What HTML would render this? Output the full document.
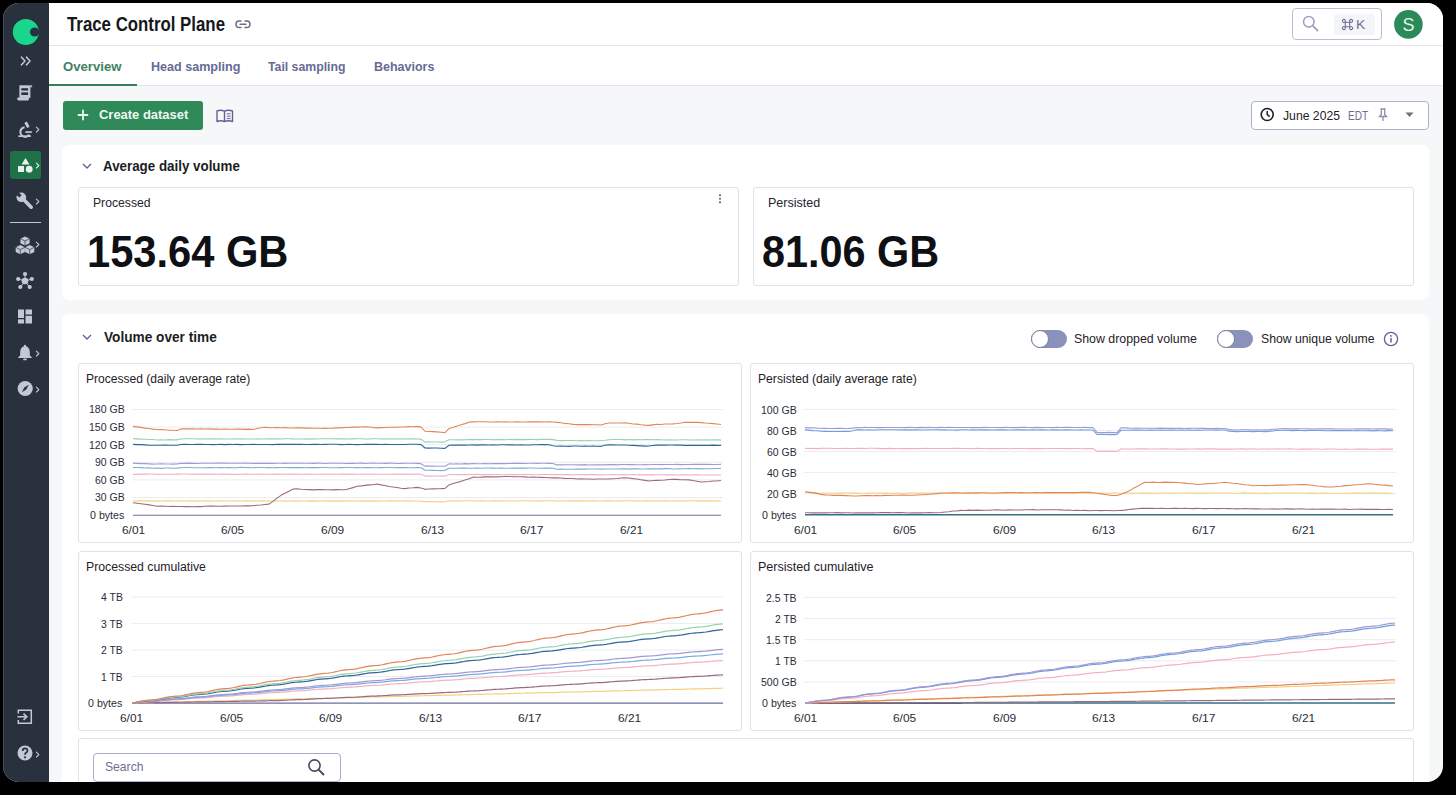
<!DOCTYPE html>
<html><head><meta charset="utf-8"><title>Trace Control Plane</title><style>
*{box-sizing:border-box;margin:0;padding:0}
html,body{width:1456px;height:795px;overflow:hidden;background:#000;font-family:"Liberation Sans",sans-serif}
#screen{position:absolute;left:3px;top:3px;width:1440px;height:779px;border-radius:16px;overflow:hidden;background:#f6f7f9}
#pg{position:absolute;left:-3px;top:-3px;width:1456px;height:795px}
.t{position:absolute;white-space:nowrap}
.b{position:absolute}
svg{position:absolute;overflow:visible}
</style></head><body><div id="screen"><div id="pg">
<div class="b" style="left:3px;top:3px;width:46px;height:792px;background:#29313f;border-left:1px solid #454b56"></div>
<div class="b" style="left:49px;top:3px;width:1394px;height:43px;background:#fff;border-bottom:1px solid #e3e4ea"></div>
<div class="b" style="left:49px;top:46px;width:1394px;height:40px;background:#fff;border-bottom:1px solid #e3e4ea"></div>
<div class="b" style="left:49px;top:84px;width:88px;height:2px;background:#3a7d5c"></div>
<svg style="left:12px;top:18px" width="28" height="28" viewBox="0 0 28 28"><circle cx="13.8" cy="14" r="13" fill="#19d68b"/><circle cx="22.6" cy="14" r="4.6" fill="#29313f"/></svg>
<svg style="left:20px;top:56px" width="12" height="10" viewBox="0 0 12 10"><path d="M1.5 1.2 L5 5 L1.5 8.8 M6.5 1.2 L10 5 L6.5 8.8" fill="none" stroke="#c3c8d4" stroke-width="1.6" stroke-linecap="round" stroke-linejoin="round"/></svg>
<svg style="left:17px;top:85px" width="16" height="16" viewBox="0 0 16 16"><rect x="2.4" y="0.3" width="11" height="12.6" fill="#c3c8d4"/><path d="M13.4 0.3 H14 Q15.2 0.3 15.2 1.6 V2.3 H13.4 Z" fill="#c3c8d4"/><rect x="4.3" y="3.2" width="6.8" height="2.3" fill="#29313f"/><rect x="4.3" y="7.4" width="6.8" height="2.6" fill="#29313f"/><rect x="0.2" y="12.6" width="11.8" height="2.8" rx="1.3" fill="#c3c8d4"/></svg>
<svg style="left:17px;top:121px" width="17" height="17" viewBox="0 0 17 17"><path d="M8.6 1.2 L11.4 6.4" stroke="#c3c8d4" stroke-width="2.9"/><path d="M7.6 6.2 A4.9 4.9 0 1 0 12.4 13.6" fill="none" stroke="#c3c8d4" stroke-width="2.1"/><rect x="8.4" y="10.2" width="6.4" height="1.7" fill="#c3c8d4"/><rect x="1.3" y="14.4" width="12.6" height="1.6" fill="#c3c8d4"/></svg>
<svg style="left:35px;top:126px" width="5" height="7" viewBox="0 0 5 7"><path d="M1.4 1.2 L3.9 3.6 L1.4 6" fill="none" stroke="#c3c8d4" stroke-width="1.1" stroke-linecap="round" stroke-linejoin="round"/></svg>
<div class="b" style="left:10px;top:151px;width:31px;height:28px;background:#1f7248;border-radius:3px"></div>
<svg style="left:17px;top:157px" width="17" height="17" viewBox="0 0 17 17"><path d="M8.5 1 L12.5 7.5 H4.5 Z" fill="#e8f2ec"/><rect x="1" y="9" width="6" height="6" fill="#e8f2ec"/><circle cx="12.2" cy="12.2" r="3.4" fill="#e8f2ec"/></svg>
<svg style="left:35px;top:162px" width="5" height="7" viewBox="0 0 5 7"><path d="M1.4 1.2 L3.9 3.6 L1.4 6" fill="none" stroke="#e8f2ec" stroke-width="1.1" stroke-linecap="round" stroke-linejoin="round"/></svg>
<svg style="left:16px;top:192px" width="18" height="18" viewBox="0 0 18 18"><path d="M7.6 7.6 L15.2 15.2" stroke="#c3c8d4" stroke-width="3.6" stroke-linecap="round"/><circle cx="5.3" cy="5.3" r="4.8" fill="#c3c8d4"/><path d="M-0.5 1.8 L1.8 -0.5 L5.6 3.3 L3.3 5.6 Z" fill="#29313f"/></svg>
<svg style="left:35px;top:198px" width="5" height="7" viewBox="0 0 5 7"><path d="M1.4 1.2 L3.9 3.6 L1.4 6" fill="none" stroke="#c3c8d4" stroke-width="1.1" stroke-linecap="round" stroke-linejoin="round"/></svg>
<div class="b" style="left:10px;top:222px;width:31px;height:1px;background:#c3c8d4"></div>
<svg style="left:15px;top:236px" width="20" height="20" viewBox="0 0 20 20"><path d="M10 0.40000000000000036 L14.6 2.7 L14.6 7.3 L10 9.6 L5.4 7.3 L5.4 2.7 Z" fill="#c3c8d4"/><path d="M5.4 2.7 L10 5 L14.6 2.7 M10 5 V9.6" fill="none" stroke="#29313f" stroke-width="0.7"/><path d="M5.3 9.0 L9.899999999999999 11.3 L9.899999999999999 15.899999999999999 L5.3 18.2 L0.7000000000000002 15.899999999999999 L0.7000000000000002 11.3 Z" fill="#c3c8d4"/><path d="M0.7000000000000002 11.3 L5.3 13.6 L9.899999999999999 11.3 M5.3 13.6 V18.2" fill="none" stroke="#29313f" stroke-width="0.7"/><path d="M14.7 9.0 L19.299999999999997 11.3 L19.299999999999997 15.899999999999999 L14.7 18.2 L10.1 15.899999999999999 L10.1 11.3 Z" fill="#c3c8d4"/><path d="M10.1 11.3 L14.7 13.6 L19.299999999999997 11.3 M14.7 13.6 V18.2" fill="none" stroke="#29313f" stroke-width="0.7"/></svg>
<svg style="left:35px;top:241px" width="5" height="7" viewBox="0 0 5 7"><path d="M1.4 1.2 L3.9 3.6 L1.4 6" fill="none" stroke="#c3c8d4" stroke-width="1.1" stroke-linecap="round" stroke-linejoin="round"/></svg>
<svg style="left:15px;top:271px" width="20" height="20" viewBox="0 0 20 20"><path d="M10 10 L10 3 M10 10 L3.2 8 M10 10 L16.8 8 M10 10 L5.3 16.3 M10 10 L14.7 16.3" stroke="#c3c8d4" stroke-width="1.0"/><circle cx="10" cy="10" r="3.3" fill="#c3c8d4"/><circle cx="10" cy="3" r="2.1" fill="#c3c8d4"/><circle cx="3.2" cy="8" r="2.1" fill="#c3c8d4"/><circle cx="16.8" cy="8" r="2.1" fill="#c3c8d4"/><circle cx="5.3" cy="16" r="2.1" fill="#c3c8d4"/><circle cx="14.7" cy="16" r="2.1" fill="#c3c8d4"/></svg>
<svg style="left:18px;top:309px" width="15" height="15" viewBox="0 0 15 15"><rect x="0" y="0.5" width="6" height="8.5" fill="#c3c8d4"/><rect x="7.5" y="0.5" width="6.5" height="5" fill="#c3c8d4"/><rect x="0" y="10.3" width="6" height="4.2" fill="#c3c8d4"/><rect x="7.5" y="6.8" width="6.5" height="7.7" fill="#c3c8d4"/></svg>
<svg style="left:17px;top:344px" width="16" height="18" viewBox="0 0 16 18"><path d="M8 0.8 Q9 0.8 9.1 2.2 Q12.6 3.4 12.8 8 V11.3 L15.2 14 H0.8 L3.2 11.3 V8 Q3.4 3.4 6.9 2.2 Q7 0.8 8 0.8 Z" fill="#c3c8d4"/><rect x="6.2" y="14.6" width="3.6" height="1.7" rx="0.85" fill="#c3c8d4"/></svg>
<svg style="left:35px;top:350px" width="5" height="7" viewBox="0 0 5 7"><path d="M1.4 1.2 L3.9 3.6 L1.4 6" fill="none" stroke="#c3c8d4" stroke-width="1.1" stroke-linecap="round" stroke-linejoin="round"/></svg>
<svg style="left:17px;top:380px" width="17" height="17" viewBox="0 0 17 17"><circle cx="8.2" cy="8.5" r="7.6" fill="#c3c8d4"/><path d="M11.8 4.8 L9.3 9.6 L5 12.2 L7.2 7.5 Z" fill="#29313f"/></svg>
<svg style="left:35px;top:386px" width="5" height="7" viewBox="0 0 5 7"><path d="M1.4 1.2 L3.9 3.6 L1.4 6" fill="none" stroke="#c3c8d4" stroke-width="1.1" stroke-linecap="round" stroke-linejoin="round"/></svg>
<svg style="left:17px;top:709px" width="16" height="16" viewBox="0 0 16 16"><path d="M1.3 4.5 V1.3 H14.3 V14.3 H1.3 V11" fill="none" stroke="#c3c8d4" stroke-width="1.5"/><path d="M0.5 7.8 H9.5 M6.5 4.6 L9.8 7.8 L6.5 11" fill="none" stroke="#c3c8d4" stroke-width="1.6"/></svg>
<svg style="left:17px;top:745px" width="16" height="17" viewBox="0 0 16 17"><circle cx="8" cy="8" r="7.5" fill="#c3c8d4"/><path d="M5.6 6 Q5.6 3.4 8 3.4 Q10.5 3.4 10.5 5.7 Q10.5 7 9 7.8 Q8 8.4 8 9.8" fill="none" stroke="#29313f" stroke-width="1.7"/><circle cx="8" cy="12.3" r="1.1" fill="#29313f"/></svg>
<svg style="left:35px;top:751px" width="5" height="7" viewBox="0 0 5 7"><path d="M1.4 1.2 L3.9 3.6 L1.4 6" fill="none" stroke="#c3c8d4" stroke-width="1.1" stroke-linecap="round" stroke-linejoin="round"/></svg>
<div class="t" style="left:67.43px;top:13.56px;font-size:20px;line-height:20px;font-weight:700;color:#16181d;transform:scaleX(0.8411);transform-origin:0 0;">Trace Control Plane</div>
<svg style="left:235px;top:20px" width="16" height="9" viewBox="0 0 16 9"><path d="M6 1 H4.2 Q1 1 1 4.2 Q1 7.5 4.2 7.5 H6 M10 1 H11.8 Q15 1 15 4.2 Q15 7.5 11.8 7.5 H10 M5 4.25 H11" fill="none" stroke="#6a6e82" stroke-width="1.5" stroke-linecap="round"/></svg>
<div class="b" style="left:1292px;top:8px;width:90px;height:32px;border:1px solid #b9bcd3;border-radius:4px;background:#fff"></div>
<svg style="left:1302px;top:15px" width="17" height="17" viewBox="0 0 17 17"><circle cx="6.8" cy="6.8" r="5.3" fill="none" stroke="#9ea2c4" stroke-width="1.6"/><path d="M10.6 10.6 L15.5 15.5" stroke="#9ea2c4" stroke-width="1.8" stroke-linecap="round"/></svg>
<div class="b" style="left:1334px;top:14px;width:41px;height:21px;background:#f4f5f9;border-radius:3px"></div>
<svg style="left:1342px;top:19px" width="11" height="11" viewBox="0 0 11 11"><path d="M3.3 3.3 H7.7 V7.7 H3.3 Z M3.3 3.3 V2.3 A1.5 1.5 0 1 0 2.3 3.3 H3.3 M7.7 3.3 H8.7 A1.5 1.5 0 1 0 7.7 2.3 V3.3 M7.7 7.7 V8.7 A1.5 1.5 0 1 0 8.7 7.7 H7.7 M3.3 7.7 H2.3 A1.5 1.5 0 1 0 3.3 8.7 V7.7" fill="none" stroke="#6c7093" stroke-width="1.1"/></svg>
<div class="t" style="left:1356.09px;top:18.97px;font-size:12.2px;line-height:12.2px;color:#6c7093;transform:scaleX(1.1404);transform-origin:0 0;">K</div>
<svg style="left:1394px;top:10px" width="29" height="29" viewBox="0 0 29 29"><circle cx="14.4" cy="14.4" r="14.3" fill="#2b8a5a"/></svg>
<div class="t" style="left:1402.62px;top:16.05px;font-size:18px;line-height:18px;color:#e3f7e9;">S</div>
<div class="t" style="left:63.17px;top:60.39px;font-size:13px;line-height:13px;font-weight:700;color:#3f8262;transform:scaleX(1.0117);transform-origin:0 0;">Overview</div>
<div class="t" style="left:150.78px;top:60.39px;font-size:13px;line-height:13px;font-weight:700;color:#666a96;transform:scaleX(0.9665);transform-origin:0 0;">Head sampling</div>
<div class="t" style="left:268.38px;top:60.39px;font-size:13px;line-height:13px;font-weight:700;color:#666a96;transform:scaleX(0.9430);transform-origin:0 0;">Tail sampling</div>
<div class="t" style="left:374.19px;top:60.39px;font-size:13px;line-height:13px;font-weight:700;color:#666a96;transform:scaleX(0.9595);transform-origin:0 0;">Behaviors</div>
<div class="b" style="left:63px;top:101px;width:140px;height:29px;background:#2f8959;border-radius:3px"></div>
<svg style="left:77px;top:109px" width="12" height="12" viewBox="0 0 12 12"><path d="M6 0.8 V11.2 M0.8 6 H11.2" stroke="#eef8f1" stroke-width="1.8"/></svg>
<div class="t" style="left:99.08px;top:108.49px;font-size:13px;line-height:13px;font-weight:700;color:#eef8f1;transform:scaleX(0.9964);transform-origin:0 0;">Create dataset</div>
<svg style="left:216px;top:109px" width="18" height="14" viewBox="0 0 18 14"><path d="M1 2 Q4.5 0.5 8.5 2.2 V12.5 Q4.5 11 1 12.5 Z M8.5 2.2 Q12.5 0.5 16.5 2 V12.5 Q12.5 11 8.5 12.5" fill="none" stroke="#5f6396" stroke-width="1.4" stroke-linejoin="round"/><path d="M10.8 4.8 H14.5 M10.8 7.2 H14.5 M10.8 9.6 H14.5" stroke="#5f6396" stroke-width="1"/></svg>
<div class="b" style="left:1251px;top:101px;width:178px;height:29px;border:1px solid #aeb1cc;border-radius:4px;background:#fff"></div>
<svg style="left:1260px;top:107px" width="15" height="15" viewBox="0 0 15 15"><circle cx="7.2" cy="7.5" r="6" fill="none" stroke="#1f2128" stroke-width="1.6"/><path d="M7.2 4 V7.6 L9.8 9.6" fill="none" stroke="#1f2128" stroke-width="1.5"/></svg>
<div class="t" style="left:1283.12px;top:109.19px;font-size:13px;line-height:13px;color:#1f2128;transform:scaleX(0.9384);transform-origin:0 0;">June 2025</div>
<div class="t" style="left:1347.69px;top:110.04px;font-size:12px;line-height:12px;color:#6b6f96;transform:scaleX(0.8421);transform-origin:0 0;">EDT</div>
<svg style="left:1378px;top:108px" width="10" height="14" viewBox="0 0 10 14"><path d="M2.5 1 H7.5 M3.3 1 V6.5 L1.5 8.5 H8.5 L6.7 6.5 V1 M5 8.5 V13" fill="none" stroke="#8d90a4" stroke-width="1.3"/></svg>
<svg style="left:1405px;top:112px" width="9" height="6" viewBox="0 0 9 6"><path d="M0.5 0.5 H8.5 L4.5 5 Z" fill="#6d7080"/></svg>
<div class="b" style="left:62px;top:145px;width:1367px;height:155px;background:#fff;border-radius:7px"></div>
<svg style="left:82px;top:163px" width="10" height="7" viewBox="0 0 10 7"><path d="M1 1 L5 5 L9 1" fill="none" stroke="#5c6090" stroke-width="1.3"/></svg>
<div class="t" style="left:103.47px;top:159.14px;font-size:14px;line-height:14px;font-weight:700;color:#1b1d24;transform:scaleX(0.9538);transform-origin:0 0;">Average daily volume</div>
<div class="b" style="left:78px;top:187px;width:661px;height:99px;border:1px solid #dfe1e7;border-radius:3px;background:#fff"></div>
<div class="b" style="left:753px;top:187px;width:661px;height:99px;border:1px solid #dfe1e7;border-radius:3px;background:#fff"></div>
<div class="t" style="left:92.73px;top:196.93px;font-size:12.6px;line-height:12.6px;color:#22252b;transform:scaleX(0.9669);transform-origin:0 0;">Processed</div>
<div class="t" style="left:768.30px;top:196.93px;font-size:12.6px;line-height:12.6px;color:#22252b;transform:scaleX(0.9931);transform-origin:0 0;">Persisted</div>
<div class="t" style="left:87.20px;top:229.08px;font-size:45px;line-height:45px;font-weight:700;color:#0f1014;transform:scaleX(0.9255);transform-origin:0 0;">153.64 GB</div>
<div class="t" style="left:762.16px;top:229.38px;font-size:45px;line-height:45px;font-weight:700;color:#0f1014;transform:scaleX(0.9195);transform-origin:0 0;">81.06 GB</div>
<svg style="left:718px;top:194px" width="4" height="10" viewBox="0 0 4 10"><circle cx="2" cy="1.3" r="1" fill="#55596e"/><circle cx="2" cy="4.8" r="1" fill="#55596e"/><circle cx="2" cy="8.3" r="1" fill="#55596e"/></svg>
<div class="b" style="left:62px;top:314px;width:1367px;height:481px;background:#fff;border-radius:7px"></div>
<svg style="left:82px;top:334px" width="10" height="7" viewBox="0 0 10 7"><path d="M1 1 L5 5 L9 1" fill="none" stroke="#5c6090" stroke-width="1.3"/></svg>
<div class="t" style="left:103.63px;top:330.44px;font-size:14px;line-height:14px;font-weight:700;color:#1b1d24;transform:scaleX(0.9750);transform-origin:0 0;">Volume over time</div>
<div class="b" style="left:1031px;top:330px;width:36px;height:18px;background:#8a92bc;border-radius:9px"></div><div class="b" style="left:1031px;top:330px;width:18px;height:18px;background:#fff;border:1px solid #7a7f9c;border-radius:50%"></div>
<div class="t" style="left:1074.44px;top:333.10px;font-size:12.4px;line-height:12.4px;color:#1f2128;transform:scaleX(0.9962);transform-origin:0 0;">Show dropped volume</div>
<div class="b" style="left:1217px;top:330px;width:36px;height:18px;background:#8a92bc;border-radius:9px"></div><div class="b" style="left:1217px;top:330px;width:18px;height:18px;background:#fff;border:1px solid #7a7f9c;border-radius:50%"></div>
<div class="t" style="left:1260.65px;top:333.10px;font-size:12.4px;line-height:12.4px;color:#1f2128;transform:scaleX(0.9876);transform-origin:0 0;">Show unique volume</div>
<svg style="left:1383px;top:331px" width="16" height="16" viewBox="0 0 16 16"><circle cx="8" cy="8" r="6.6" fill="none" stroke="#5f6396" stroke-width="1.3"/><path d="M8 7 V11.5" stroke="#5f6396" stroke-width="1.5"/><circle cx="8" cy="4.9" r="0.9" fill="#5f6396"/></svg>
<div class="b" style="left:78px;top:363px;width:664px;height:180px;border:1px solid #dfe1e7;border-radius:3px;background:#fff"></div>
<div class="b" style="left:750px;top:363px;width:664px;height:180px;border:1px solid #dfe1e7;border-radius:3px;background:#fff"></div>
<div class="b" style="left:78px;top:551px;width:664px;height:180px;border:1px solid #dfe1e7;border-radius:3px;background:#fff"></div>
<div class="b" style="left:750px;top:551px;width:664px;height:180px;border:1px solid #dfe1e7;border-radius:3px;background:#fff"></div>
<div class="b" style="left:78px;top:738px;width:1336px;height:62px;border:1px solid #dfe1e7;border-radius:3px;background:#fff"></div>
<div class="t" style="left:85.74px;top:373.04px;font-size:12px;line-height:12px;color:#1f2128;transform:scaleX(1.0049);transform-origin:0 0;">Processed (daily average rate)</div>
<div class="t" style="left:758.03px;top:373.04px;font-size:12px;line-height:12px;color:#1f2128;transform:scaleX(1.0126);transform-origin:0 0;">Persisted (daily average rate)</div>
<div class="t" style="left:85.52px;top:560.74px;font-size:12px;line-height:12px;color:#1f2128;transform:scaleX(1.0211);transform-origin:0 0;">Processed cumulative</div>
<div class="t" style="left:758.20px;top:560.74px;font-size:12px;line-height:12px;color:#1f2128;transform:scaleX(1.0440);transform-origin:0 0;">Persisted cumulative</div>
<svg style="left:0;top:0" width="1456" height="795"><path d="M132 409.5 H723" stroke="#ebecf0" stroke-width="1"/><path d="M132 427.1 H723" stroke="#ebecf0" stroke-width="1"/><path d="M132 444.7 H723" stroke="#ebecf0" stroke-width="1"/><path d="M132 462.3 H723" stroke="#ebecf0" stroke-width="1"/><path d="M132 479.9 H723" stroke="#ebecf0" stroke-width="1"/><path d="M132 497.5 H723" stroke="#ebecf0" stroke-width="1"/><path d="M133.0 515.20 L137.0 515.20 L141.0 515.20 L145.0 515.20 L149.0 515.20 L153.0 515.20 L157.0 515.20 L161.0 515.20 L165.0 515.20 L169.0 515.20 L173.0 515.20 L177.0 515.20 L181.0 515.20 L185.0 515.20 L189.0 515.20 L193.0 515.20 L197.0 515.20 L201.0 515.20 L205.0 515.20 L209.0 515.20 L213.0 515.20 L217.0 515.20 L221.0 515.20 L225.0 515.20 L229.0 515.20 L233.0 515.20 L237.0 515.20 L241.0 515.20 L245.0 515.20 L249.0 515.20 L253.0 515.20 L257.0 515.20 L261.0 515.20 L265.0 515.20 L269.0 515.20 L273.0 515.20 L277.0 515.20 L281.0 515.20 L285.0 515.20 L289.0 515.20 L293.0 515.20 L297.0 515.20 L301.0 515.20 L305.0 515.20 L309.0 515.20 L313.0 515.20 L317.0 515.20 L321.0 515.20 L325.0 515.20 L329.0 515.20 L333.0 515.20 L337.0 515.20 L341.0 515.20 L345.0 515.20 L349.0 515.20 L353.0 515.20 L357.0 515.20 L361.0 515.20 L365.0 515.20 L369.0 515.20 L373.0 515.20 L377.0 515.20 L381.0 515.20 L385.0 515.20 L389.0 515.20 L393.0 515.20 L397.0 515.20 L401.0 515.20 L405.0 515.20 L409.0 515.20 L413.0 515.20 L417.0 515.20 L421.0 515.20 L425.0 515.20 L429.0 515.20 L433.0 515.20 L437.0 515.20 L441.0 515.20 L445.0 515.20 L449.0 515.20 L453.0 515.20 L457.0 515.20 L461.0 515.20 L465.0 515.20 L469.0 515.20 L473.0 515.20 L477.0 515.20 L481.0 515.20 L485.0 515.20 L489.0 515.20 L493.0 515.20 L497.0 515.20 L501.0 515.20 L505.0 515.20 L509.0 515.20 L513.0 515.20 L517.0 515.20 L521.0 515.20 L525.0 515.20 L529.0 515.20 L533.0 515.20 L537.0 515.20 L541.0 515.20 L545.0 515.20 L549.0 515.20 L553.0 515.20 L557.0 515.20 L561.0 515.20 L565.0 515.20 L569.0 515.20 L573.0 515.20 L577.0 515.20 L581.0 515.20 L585.0 515.20 L589.0 515.20 L593.0 515.20 L597.0 515.20 L601.0 515.20 L605.0 515.20 L609.0 515.20 L613.0 515.20 L617.0 515.20 L621.0 515.20 L625.0 515.20 L629.0 515.20 L633.0 515.20 L637.0 515.20 L641.0 515.20 L645.0 515.20 L649.0 515.20 L653.0 515.20 L657.0 515.20 L661.0 515.20 L665.0 515.20 L669.0 515.20 L673.0 515.20 L677.0 515.20 L681.0 515.20 L685.0 515.20 L689.0 515.20 L693.0 515.20 L697.0 515.20 L701.0 515.20 L705.0 515.20 L709.0 515.20 L713.0 515.20 L717.0 515.20 L721.0 515.20" fill="none" stroke="#6b6f9b" stroke-width="1.1" stroke-linejoin="round"/><path d="M133.0 500.85 L137.0 501.09 L141.0 500.91 L145.0 500.88 L149.0 500.85 L153.0 501.12 L157.0 501.13 L161.0 501.06 L165.0 500.92 L169.0 500.91 L173.0 500.93 L177.0 500.99 L181.0 500.88 L185.0 500.98 L189.0 500.91 L193.0 501.17 L197.0 501.17 L201.0 501.02 L205.0 500.91 L209.0 501.17 L213.0 500.93 L217.0 500.95 L221.0 500.82 L225.0 500.96 L229.0 500.99 L233.0 501.00 L237.0 500.89 L241.0 501.00 L245.0 500.82 L249.0 500.92 L253.0 500.85 L257.0 500.96 L261.0 500.84 L265.0 500.83 L269.0 500.93 L273.0 500.90 L277.0 501.03 L281.0 501.01 L285.0 501.09 L289.0 501.06 L293.0 501.08 L297.0 501.14 L301.0 500.96 L305.0 500.94 L309.0 501.17 L313.0 500.87 L317.0 501.08 L321.0 501.05 L325.0 500.84 L329.0 501.12 L333.0 501.14 L337.0 501.05 L341.0 501.08 L345.0 501.11 L349.0 500.87 L353.0 501.01 L357.0 501.00 L361.0 501.12 L365.0 501.11 L369.0 501.12 L373.0 501.03 L377.0 501.14 L381.0 501.07 L385.0 501.07 L389.0 500.90 L393.0 500.83 L397.0 500.87 L401.0 500.95 L405.0 500.86 L409.0 501.12 L413.0 501.02 L417.0 501.05 L421.0 501.11 L425.0 501.67 L429.0 501.64 L433.0 501.50 L437.0 501.83 L441.0 501.85 L445.0 501.80 L449.0 500.91 L453.0 500.96 L457.0 500.74 L461.0 500.99 L465.0 500.81 L469.0 500.75 L473.0 500.82 L477.0 500.98 L481.0 500.79 L485.0 500.99 L489.0 501.07 L493.0 500.90 L497.0 500.86 L501.0 500.89 L505.0 500.97 L509.0 501.00 L513.0 500.94 L517.0 500.95 L521.0 500.75 L525.0 500.77 L529.0 500.81 L533.0 500.99 L537.0 500.83 L541.0 500.92 L545.0 500.72 L549.0 500.74 L553.0 500.82 L557.0 500.96 L561.0 500.97 L565.0 500.96 L569.0 500.82 L573.0 500.91 L577.0 500.89 L581.0 500.89 L585.0 500.76 L589.0 501.04 L593.0 500.79 L597.0 501.07 L601.0 501.06 L605.0 500.73 L609.0 500.89 L613.0 501.02 L617.0 501.07 L621.0 500.88 L625.0 500.82 L629.0 500.80 L633.0 501.06 L637.0 500.80 L641.0 500.93 L645.0 500.77 L649.0 500.91 L653.0 501.06 L657.0 500.77 L661.0 501.02 L665.0 500.90 L669.0 501.04 L673.0 500.97 L677.0 500.80 L681.0 501.04 L685.0 500.90 L689.0 500.73 L693.0 500.72 L697.0 500.90 L701.0 500.88 L705.0 500.83 L709.0 500.77 L713.0 500.84 L717.0 500.83 L721.0 501.02" fill="none" stroke="#f2d281" stroke-width="1.1" stroke-linejoin="round"/><path d="M133.0 502.72 L137.0 503.29 L141.0 503.82 L145.0 504.30 L149.0 504.89 L153.0 505.49 L157.0 506.21 L161.0 506.05 L165.0 506.19 L169.0 506.49 L173.0 506.40 L177.0 506.43 L181.0 506.52 L185.0 506.67 L189.0 506.53 L193.0 506.71 L197.0 506.62 L201.0 506.61 L205.0 506.29 L209.0 506.17 L213.0 506.12 L217.0 506.21 L221.0 506.23 L225.0 506.08 L229.0 505.95 L233.0 505.96 L237.0 505.97 L241.0 505.94 L245.0 505.91 L249.0 505.89 L253.0 505.77 L257.0 505.21 L261.0 505.06 L265.0 504.44 L269.0 504.13 L273.0 501.38 L277.0 498.09 L281.0 495.33 L285.0 493.25 L289.0 491.15 L293.0 489.02 L297.0 488.71 L301.0 489.29 L305.0 489.55 L309.0 489.59 L313.0 489.83 L317.0 489.67 L321.0 489.59 L325.0 489.82 L329.0 489.78 L333.0 489.92 L337.0 489.62 L341.0 489.77 L345.0 489.73 L349.0 488.67 L353.0 487.63 L357.0 486.30 L361.0 485.90 L365.0 485.36 L369.0 484.90 L373.0 484.69 L377.0 484.07 L381.0 484.91 L385.0 485.52 L389.0 486.51 L393.0 486.98 L397.0 487.49 L401.0 488.26 L405.0 488.66 L409.0 487.98 L413.0 487.77 L417.0 487.39 L421.0 487.94 L425.0 489.35 L429.0 489.07 L433.0 488.90 L437.0 488.72 L441.0 488.64 L445.0 488.46 L449.0 484.91 L453.0 483.59 L457.0 482.47 L461.0 481.35 L465.0 479.93 L469.0 478.73 L473.0 477.17 L477.0 477.31 L481.0 477.15 L485.0 476.90 L489.0 476.84 L493.0 476.88 L497.0 476.86 L501.0 476.82 L505.0 476.54 L509.0 476.50 L513.0 476.75 L517.0 476.75 L521.0 476.81 L525.0 476.92 L529.0 477.25 L533.0 477.12 L537.0 477.32 L541.0 477.35 L545.0 477.47 L549.0 477.74 L553.0 477.89 L557.0 477.87 L561.0 478.02 L565.0 478.42 L569.0 478.44 L573.0 478.57 L577.0 478.98 L581.0 478.86 L585.0 479.05 L589.0 478.95 L593.0 479.18 L597.0 479.07 L601.0 479.02 L605.0 479.01 L609.0 479.00 L613.0 478.75 L617.0 478.56 L621.0 477.98 L625.0 477.89 L629.0 477.95 L633.0 478.59 L637.0 479.06 L641.0 479.71 L645.0 480.39 L649.0 481.02 L653.0 480.48 L657.0 480.37 L661.0 480.24 L665.0 480.06 L669.0 479.53 L673.0 479.26 L677.0 479.41 L681.0 479.69 L685.0 479.77 L689.0 479.88 L693.0 480.45 L697.0 481.29 L701.0 482.05 L705.0 481.68 L709.0 481.49 L713.0 480.98 L717.0 480.94 L721.0 480.47" fill="none" stroke="#9c6a82" stroke-width="1.1" stroke-linejoin="round"/><path d="M133.0 474.35 L137.0 474.36 L141.0 474.06 L145.0 474.09 L149.0 474.06 L153.0 474.03 L157.0 474.33 L161.0 474.31 L165.0 474.25 L169.0 474.32 L173.0 474.25 L177.0 474.12 L181.0 474.06 L185.0 474.06 L189.0 474.29 L193.0 474.09 L197.0 474.13 L201.0 474.17 L205.0 474.03 L209.0 474.11 L213.0 474.12 L217.0 474.28 L221.0 474.15 L225.0 474.14 L229.0 474.37 L233.0 474.20 L237.0 474.33 L241.0 474.24 L245.0 474.03 L249.0 474.17 L253.0 474.18 L257.0 474.30 L261.0 474.14 L265.0 474.27 L269.0 474.21 L273.0 474.10 L277.0 474.33 L281.0 474.05 L285.0 474.32 L289.0 474.08 L293.0 474.02 L297.0 474.09 L301.0 474.29 L305.0 474.37 L309.0 474.02 L313.0 474.20 L317.0 474.20 L321.0 474.31 L325.0 474.09 L329.0 474.20 L333.0 474.14 L337.0 474.32 L341.0 474.11 L345.0 474.36 L349.0 474.12 L353.0 474.10 L357.0 474.27 L361.0 474.20 L365.0 474.06 L369.0 474.25 L373.0 474.05 L377.0 474.30 L381.0 474.27 L385.0 474.30 L389.0 474.25 L393.0 474.15 L397.0 474.16 L401.0 474.16 L405.0 474.34 L409.0 474.05 L413.0 474.34 L417.0 474.03 L421.0 474.31 L425.0 475.91 L429.0 476.14 L433.0 476.00 L437.0 475.96 L441.0 476.14 L445.0 475.90 L449.0 474.49 L453.0 474.52 L457.0 474.60 L461.0 474.61 L465.0 474.58 L469.0 474.48 L473.0 474.47 L477.0 474.42 L481.0 474.67 L485.0 474.61 L489.0 474.65 L493.0 474.45 L497.0 474.55 L501.0 474.68 L505.0 474.61 L509.0 474.45 L513.0 474.58 L517.0 474.74 L521.0 474.51 L525.0 474.50 L529.0 474.55 L533.0 474.70 L537.0 474.75 L541.0 474.51 L545.0 474.52 L549.0 474.56 L553.0 474.59 L557.0 474.67 L561.0 474.54 L565.0 474.61 L569.0 474.56 L573.0 474.85 L577.0 474.77 L581.0 474.55 L585.0 474.87 L589.0 474.56 L593.0 474.67 L597.0 474.89 L601.0 474.83 L605.0 474.81 L609.0 474.71 L613.0 474.63 L617.0 474.80 L621.0 474.61 L625.0 474.65 L629.0 474.72 L633.0 474.60 L637.0 474.74 L641.0 474.89 L645.0 474.86 L649.0 474.79 L653.0 474.85 L657.0 474.79 L661.0 474.68 L665.0 474.85 L669.0 474.79 L673.0 474.92 L677.0 474.98 L681.0 474.81 L685.0 474.87 L689.0 474.94 L693.0 474.83 L697.0 474.77 L701.0 474.95 L705.0 475.01 L709.0 474.98 L713.0 474.96 L717.0 475.02 L721.0 474.96" fill="none" stroke="#f4afc0" stroke-width="1.1" stroke-linejoin="round"/><path d="M133.0 467.47 L137.0 467.54 L141.0 467.64 L145.0 468.00 L149.0 467.91 L153.0 468.32 L157.0 468.05 L161.0 468.33 L165.0 468.07 L169.0 468.03 L173.0 468.28 L177.0 468.11 L181.0 467.78 L185.0 467.49 L189.0 467.44 L193.0 467.70 L197.0 467.68 L201.0 467.73 L205.0 467.68 L209.0 467.45 L213.0 467.65 L217.0 467.68 L221.0 467.59 L225.0 467.76 L229.0 467.51 L233.0 467.77 L237.0 467.68 L241.0 467.42 L245.0 467.43 L249.0 467.65 L253.0 467.71 L257.0 467.45 L261.0 467.53 L265.0 467.68 L269.0 467.48 L273.0 467.73 L277.0 467.60 L281.0 467.44 L285.0 467.55 L289.0 467.63 L293.0 467.58 L297.0 467.66 L301.0 467.47 L305.0 467.71 L309.0 467.55 L313.0 467.65 L317.0 467.65 L321.0 467.57 L325.0 467.56 L329.0 467.70 L333.0 467.76 L337.0 467.70 L341.0 467.62 L345.0 467.53 L349.0 467.44 L353.0 467.77 L357.0 467.67 L361.0 467.72 L365.0 467.54 L369.0 467.64 L373.0 467.77 L377.0 467.72 L381.0 467.64 L385.0 467.53 L389.0 467.57 L393.0 467.74 L397.0 467.56 L401.0 467.67 L405.0 467.64 L409.0 467.74 L413.0 467.71 L417.0 467.52 L421.0 467.74 L425.0 470.22 L429.0 470.31 L433.0 470.41 L437.0 470.53 L441.0 470.60 L445.0 470.33 L449.0 468.22 L453.0 468.21 L457.0 468.23 L461.0 468.13 L465.0 468.02 L469.0 468.23 L473.0 468.21 L477.0 468.17 L481.0 468.25 L485.0 468.04 L489.0 467.95 L493.0 468.12 L497.0 468.21 L501.0 467.99 L505.0 468.19 L509.0 468.26 L513.0 468.00 L517.0 468.14 L521.0 468.16 L525.0 468.09 L529.0 467.99 L533.0 468.01 L537.0 468.19 L541.0 468.20 L545.0 468.09 L549.0 467.95 L553.0 468.29 L557.0 469.30 L561.0 469.09 L565.0 469.20 L569.0 469.30 L573.0 469.28 L577.0 469.14 L581.0 469.10 L585.0 469.13 L589.0 468.97 L593.0 468.96 L597.0 468.94 L601.0 469.11 L605.0 468.98 L609.0 469.03 L613.0 468.96 L617.0 468.99 L621.0 468.84 L625.0 468.79 L629.0 469.12 L633.0 468.88 L637.0 468.77 L641.0 468.94 L645.0 468.98 L649.0 468.74 L653.0 468.89 L657.0 468.78 L661.0 468.83 L665.0 468.63 L669.0 468.62 L673.0 468.95 L677.0 468.90 L681.0 468.74 L685.0 468.76 L689.0 468.63 L693.0 468.81 L697.0 468.66 L701.0 468.84 L705.0 468.76 L709.0 468.76 L713.0 468.80 L717.0 468.53 L721.0 468.44" fill="none" stroke="#78ade0" stroke-width="1.1" stroke-linejoin="round"/><path d="M133.0 463.35 L137.0 463.34 L141.0 463.62 L145.0 463.61 L149.0 463.83 L153.0 464.10 L157.0 464.04 L161.0 463.91 L165.0 464.01 L169.0 463.98 L173.0 464.16 L177.0 463.92 L181.0 463.34 L185.0 463.35 L189.0 463.16 L193.0 463.33 L197.0 463.46 L201.0 463.30 L205.0 463.22 L209.0 463.29 L213.0 463.31 L217.0 463.17 L221.0 463.16 L225.0 463.17 L229.0 463.23 L233.0 463.27 L237.0 463.22 L241.0 463.21 L245.0 463.15 L249.0 463.32 L253.0 463.42 L257.0 463.34 L261.0 463.33 L265.0 463.35 L269.0 463.19 L273.0 463.38 L277.0 463.29 L281.0 463.32 L285.0 463.34 L289.0 463.29 L293.0 463.23 L297.0 463.21 L301.0 463.20 L305.0 463.30 L309.0 463.26 L313.0 463.33 L317.0 463.12 L321.0 463.25 L325.0 463.43 L329.0 463.21 L333.0 463.32 L337.0 463.30 L341.0 463.22 L345.0 463.48 L349.0 463.23 L353.0 463.40 L357.0 463.18 L361.0 463.14 L365.0 463.43 L369.0 463.28 L373.0 463.14 L377.0 463.26 L381.0 463.28 L385.0 463.38 L389.0 463.16 L393.0 463.20 L397.0 463.47 L401.0 463.39 L405.0 463.18 L409.0 463.24 L413.0 463.25 L417.0 463.36 L421.0 463.66 L425.0 466.13 L429.0 466.16 L433.0 466.09 L437.0 466.21 L441.0 466.25 L445.0 466.29 L449.0 463.89 L453.0 463.97 L457.0 463.92 L461.0 463.96 L465.0 463.65 L469.0 463.90 L473.0 463.56 L477.0 463.80 L481.0 463.71 L485.0 463.65 L489.0 463.79 L493.0 463.63 L497.0 463.54 L501.0 463.65 L505.0 463.65 L509.0 463.53 L513.0 463.42 L517.0 463.42 L521.0 463.40 L525.0 463.47 L529.0 463.28 L533.0 463.29 L537.0 463.33 L541.0 463.24 L545.0 463.19 L549.0 463.33 L553.0 463.44 L557.0 464.90 L561.0 464.87 L565.0 464.76 L569.0 464.79 L573.0 464.71 L577.0 464.85 L581.0 464.84 L585.0 464.65 L589.0 464.93 L593.0 464.71 L597.0 464.88 L601.0 464.86 L605.0 464.89 L609.0 464.60 L613.0 464.67 L617.0 464.83 L621.0 464.49 L625.0 464.49 L629.0 464.66 L633.0 464.62 L637.0 464.76 L641.0 464.69 L645.0 464.59 L649.0 464.74 L653.0 464.56 L657.0 464.54 L661.0 464.59 L665.0 464.47 L669.0 464.44 L673.0 464.51 L677.0 464.41 L681.0 464.61 L685.0 464.50 L689.0 464.43 L693.0 464.26 L697.0 464.35 L701.0 464.34 L705.0 464.38 L709.0 464.37 L713.0 464.47 L717.0 464.49 L721.0 464.30" fill="none" stroke="#a597d6" stroke-width="1.1" stroke-linejoin="round"/><path d="M133.0 444.37 L137.0 444.59 L141.0 444.58 L145.0 444.87 L149.0 445.21 L153.0 445.27 L157.0 445.32 L161.0 445.21 L165.0 445.14 L169.0 445.25 L173.0 445.27 L177.0 445.19 L181.0 444.56 L185.0 444.37 L189.0 444.57 L193.0 444.56 L197.0 444.40 L201.0 444.40 L205.0 444.50 L209.0 444.47 L213.0 444.64 L217.0 444.43 L221.0 444.41 L225.0 444.62 L229.0 444.35 L233.0 444.50 L237.0 444.42 L241.0 444.59 L245.0 444.49 L249.0 444.57 L253.0 444.35 L257.0 444.53 L261.0 444.50 L265.0 444.45 L269.0 444.56 L273.0 444.58 L277.0 444.32 L281.0 444.38 L285.0 444.41 L289.0 444.35 L293.0 444.30 L297.0 444.37 L301.0 444.34 L305.0 444.52 L309.0 444.43 L313.0 444.31 L317.0 444.38 L321.0 444.43 L325.0 444.39 L329.0 444.32 L333.0 444.28 L337.0 444.26 L341.0 444.61 L345.0 444.52 L349.0 444.28 L353.0 444.51 L357.0 444.60 L361.0 444.45 L365.0 444.28 L369.0 444.42 L373.0 444.40 L377.0 444.31 L381.0 444.43 L385.0 444.24 L389.0 444.56 L393.0 444.46 L397.0 444.46 L401.0 444.56 L405.0 444.46 L409.0 444.32 L413.0 444.31 L417.0 444.27 L421.0 444.65 L425.0 448.00 L429.0 448.11 L433.0 447.99 L437.0 448.03 L441.0 448.27 L445.0 448.42 L449.0 445.25 L453.0 444.96 L457.0 445.17 L461.0 445.17 L465.0 445.12 L469.0 444.96 L473.0 444.89 L477.0 445.10 L481.0 444.91 L485.0 444.91 L489.0 444.96 L493.0 444.88 L497.0 445.03 L501.0 444.80 L505.0 444.71 L509.0 444.89 L513.0 444.89 L517.0 444.95 L521.0 444.89 L525.0 444.94 L529.0 444.94 L533.0 444.76 L537.0 444.75 L541.0 444.61 L545.0 444.65 L549.0 444.73 L553.0 445.67 L557.0 446.27 L561.0 446.08 L565.0 446.18 L569.0 446.37 L573.0 446.05 L577.0 446.03 L581.0 446.18 L585.0 446.09 L589.0 446.28 L593.0 446.02 L597.0 446.32 L601.0 446.33 L605.0 445.31 L609.0 444.90 L613.0 444.90 L617.0 445.07 L621.0 445.06 L625.0 445.07 L629.0 445.21 L633.0 445.42 L637.0 445.67 L641.0 445.90 L645.0 446.10 L649.0 446.01 L653.0 445.54 L657.0 445.09 L661.0 445.14 L665.0 445.08 L669.0 445.03 L673.0 445.00 L677.0 445.10 L681.0 445.16 L685.0 445.36 L689.0 445.35 L693.0 445.34 L697.0 445.40 L701.0 445.40 L705.0 445.29 L709.0 445.37 L713.0 445.11 L717.0 445.35 L721.0 445.34" fill="none" stroke="#2f659c" stroke-width="1.1" stroke-linejoin="round"/><path d="M133.0 438.64 L137.0 438.90 L141.0 439.14 L145.0 439.22 L149.0 439.50 L153.0 439.54 L157.0 439.95 L161.0 439.82 L165.0 439.98 L169.0 439.64 L173.0 439.84 L177.0 439.88 L181.0 438.98 L185.0 438.75 L189.0 438.78 L193.0 438.77 L197.0 439.00 L201.0 438.75 L205.0 439.01 L209.0 438.87 L213.0 438.91 L217.0 438.93 L221.0 438.92 L225.0 438.96 L229.0 438.94 L233.0 438.84 L237.0 438.99 L241.0 438.81 L245.0 438.98 L249.0 438.99 L253.0 439.00 L257.0 438.83 L261.0 439.00 L265.0 439.07 L269.0 438.88 L273.0 438.82 L277.0 438.91 L281.0 439.06 L285.0 438.77 L289.0 438.72 L293.0 438.89 L297.0 438.96 L301.0 439.00 L305.0 438.85 L309.0 439.08 L313.0 438.80 L317.0 438.99 L321.0 438.75 L325.0 438.73 L329.0 438.77 L333.0 438.74 L337.0 438.90 L341.0 438.92 L345.0 438.79 L349.0 439.06 L353.0 438.85 L357.0 438.77 L361.0 438.78 L365.0 438.99 L369.0 439.05 L373.0 438.78 L377.0 438.73 L381.0 439.00 L385.0 438.81 L389.0 439.07 L393.0 438.90 L397.0 438.95 L401.0 438.84 L405.0 439.01 L409.0 438.89 L413.0 438.84 L417.0 439.05 L421.0 439.13 L425.0 442.08 L429.0 441.84 L433.0 442.05 L437.0 441.96 L441.0 442.13 L445.0 441.84 L449.0 439.82 L453.0 439.75 L457.0 439.92 L461.0 439.91 L465.0 439.78 L469.0 439.62 L473.0 439.62 L477.0 439.60 L481.0 439.65 L485.0 439.56 L489.0 439.54 L493.0 439.72 L497.0 439.66 L501.0 439.53 L505.0 439.76 L509.0 439.47 L513.0 439.58 L517.0 439.41 L521.0 439.65 L525.0 439.64 L529.0 439.41 L533.0 439.57 L537.0 439.58 L541.0 439.37 L545.0 439.37 L549.0 439.41 L553.0 439.64 L557.0 440.38 L561.0 440.58 L565.0 440.55 L569.0 440.51 L573.0 440.57 L577.0 440.68 L581.0 440.45 L585.0 440.70 L589.0 440.52 L593.0 440.68 L597.0 440.72 L601.0 440.48 L605.0 440.21 L609.0 439.78 L613.0 439.54 L617.0 439.46 L621.0 439.51 L625.0 439.83 L629.0 439.50 L633.0 439.84 L637.0 439.58 L641.0 439.80 L645.0 439.58 L649.0 439.62 L653.0 439.82 L657.0 439.62 L661.0 439.73 L665.0 439.95 L669.0 439.89 L673.0 439.97 L677.0 440.01 L681.0 439.69 L685.0 439.77 L689.0 439.99 L693.0 439.97 L697.0 439.75 L701.0 439.93 L705.0 439.84 L709.0 439.93 L713.0 439.83 L717.0 439.81 L721.0 440.17" fill="none" stroke="#98d2ae" stroke-width="1.1" stroke-linejoin="round"/><path d="M133.0 426.42 L137.0 426.87 L141.0 427.39 L145.0 428.11 L149.0 428.46 L153.0 429.15 L157.0 429.53 L161.0 429.65 L165.0 429.81 L169.0 430.18 L173.0 430.21 L177.0 430.57 L181.0 428.91 L185.0 428.80 L189.0 428.90 L193.0 428.72 L197.0 429.04 L201.0 428.78 L205.0 429.00 L209.0 428.88 L213.0 429.17 L217.0 429.07 L221.0 429.18 L225.0 429.10 L229.0 429.19 L233.0 429.22 L237.0 429.11 L241.0 429.11 L245.0 429.36 L249.0 429.14 L253.0 429.45 L257.0 428.57 L261.0 427.80 L265.0 427.27 L269.0 427.58 L273.0 427.71 L277.0 427.58 L281.0 427.73 L285.0 427.65 L289.0 427.95 L293.0 427.94 L297.0 427.81 L301.0 427.84 L305.0 428.13 L309.0 427.96 L313.0 428.31 L317.0 428.18 L321.0 428.23 L325.0 428.42 L329.0 428.20 L333.0 428.11 L337.0 427.79 L341.0 427.89 L345.0 427.51 L349.0 427.52 L353.0 427.10 L357.0 427.16 L361.0 427.05 L365.0 426.91 L369.0 427.06 L373.0 427.46 L377.0 427.83 L381.0 427.58 L385.0 427.57 L389.0 427.27 L393.0 427.28 L397.0 427.24 L401.0 427.01 L405.0 426.97 L409.0 426.63 L413.0 426.76 L417.0 426.38 L421.0 427.10 L425.0 431.20 L429.0 431.49 L433.0 431.66 L437.0 431.88 L441.0 432.22 L445.0 432.67 L449.0 428.52 L453.0 427.47 L457.0 425.96 L461.0 424.82 L465.0 423.61 L469.0 422.17 L473.0 421.91 L477.0 421.75 L481.0 421.77 L485.0 421.82 L489.0 422.04 L493.0 422.02 L497.0 421.80 L501.0 422.05 L505.0 421.73 L509.0 421.94 L513.0 422.07 L517.0 421.84 L521.0 422.06 L525.0 421.96 L529.0 421.74 L533.0 421.84 L537.0 421.88 L541.0 421.81 L545.0 421.99 L549.0 421.78 L553.0 422.04 L557.0 422.35 L561.0 422.76 L565.0 423.42 L569.0 423.74 L573.0 424.40 L577.0 424.65 L581.0 424.64 L585.0 424.64 L589.0 424.55 L593.0 424.78 L597.0 424.69 L601.0 424.94 L605.0 423.77 L609.0 423.03 L613.0 422.95 L617.0 422.95 L621.0 423.06 L625.0 422.88 L629.0 423.27 L633.0 423.94 L637.0 424.11 L641.0 424.68 L645.0 425.08 L649.0 425.33 L653.0 424.84 L657.0 424.29 L661.0 424.44 L665.0 424.03 L669.0 424.04 L673.0 423.92 L677.0 423.53 L681.0 423.00 L685.0 422.28 L689.0 422.41 L693.0 422.40 L697.0 422.35 L701.0 422.59 L705.0 423.01 L709.0 423.28 L713.0 423.59 L717.0 423.98 L721.0 424.55" fill="none" stroke="#e3855a" stroke-width="1.1" stroke-linejoin="round"/><path d="M804 409.4 H1396" stroke="#ebecf0" stroke-width="1"/><path d="M804 430.5 H1396" stroke="#ebecf0" stroke-width="1"/><path d="M804 451.6 H1396" stroke="#ebecf0" stroke-width="1"/><path d="M804 472.6 H1396" stroke="#ebecf0" stroke-width="1"/><path d="M804 493.7 H1396" stroke="#ebecf0" stroke-width="1"/><path d="M805.0 514.70 L809.0 514.70 L813.0 514.70 L817.0 514.70 L821.0 514.70 L825.0 514.70 L829.0 514.70 L833.0 514.70 L837.0 514.70 L841.0 514.70 L845.0 514.70 L849.0 514.70 L853.0 514.70 L857.0 514.70 L861.0 514.70 L865.0 514.70 L869.0 514.70 L873.0 514.70 L877.0 514.70 L881.0 514.70 L885.0 514.70 L889.0 514.70 L893.0 514.70 L897.0 514.70 L901.0 514.70 L905.0 514.70 L909.0 514.70 L913.0 514.70 L917.0 514.70 L921.0 514.70 L925.0 514.70 L929.0 514.70 L933.0 514.70 L937.0 514.70 L941.0 514.70 L945.0 514.70 L949.0 514.70 L953.0 514.70 L957.0 514.70 L961.0 514.70 L965.0 514.70 L969.0 514.70 L973.0 514.70 L977.0 514.70 L981.0 514.70 L985.0 514.70 L989.0 514.70 L993.0 514.70 L997.0 514.70 L1001.0 514.70 L1005.0 514.70 L1009.0 514.70 L1013.0 514.70 L1017.0 514.70 L1021.0 514.70 L1025.0 514.70 L1029.0 514.70 L1033.0 514.70 L1037.0 514.70 L1041.0 514.70 L1045.0 514.70 L1049.0 514.70 L1053.0 514.70 L1057.0 514.70 L1061.0 514.70 L1065.0 514.70 L1069.0 514.70 L1073.0 514.70 L1077.0 514.70 L1081.0 514.70 L1085.0 514.70 L1089.0 514.70 L1093.0 514.70 L1097.0 514.70 L1101.0 514.70 L1105.0 514.70 L1109.0 514.70 L1113.0 514.70 L1117.0 514.70 L1121.0 514.70 L1125.0 514.70 L1129.0 514.70 L1133.0 514.70 L1137.0 514.70 L1141.0 514.70 L1145.0 514.70 L1149.0 514.70 L1153.0 514.70 L1157.0 514.70 L1161.0 514.70 L1165.0 514.70 L1169.0 514.70 L1173.0 514.70 L1177.0 514.70 L1181.0 514.70 L1185.0 514.70 L1189.0 514.70 L1193.0 514.70 L1197.0 514.70 L1201.0 514.70 L1205.0 514.70 L1209.0 514.70 L1213.0 514.70 L1217.0 514.70 L1221.0 514.70 L1225.0 514.70 L1229.0 514.70 L1233.0 514.70 L1237.0 514.70 L1241.0 514.70 L1245.0 514.70 L1249.0 514.70 L1253.0 514.70 L1257.0 514.70 L1261.0 514.70 L1265.0 514.70 L1269.0 514.70 L1273.0 514.70 L1277.0 514.70 L1281.0 514.70 L1285.0 514.70 L1289.0 514.70 L1293.0 514.70 L1297.0 514.70 L1301.0 514.70 L1305.0 514.70 L1309.0 514.70 L1313.0 514.70 L1317.0 514.70 L1321.0 514.70 L1325.0 514.70 L1329.0 514.70 L1333.0 514.70 L1337.0 514.70 L1341.0 514.70 L1345.0 514.70 L1349.0 514.70 L1353.0 514.70 L1357.0 514.70 L1361.0 514.70 L1365.0 514.70 L1369.0 514.70 L1373.0 514.70 L1377.0 514.70 L1381.0 514.70 L1385.0 514.70 L1389.0 514.70 L1393.0 514.70" fill="none" stroke="#336f86" stroke-width="1.6" stroke-linejoin="round"/><path d="M805.0 512.68 L809.0 512.78 L813.0 512.87 L817.0 512.87 L821.0 512.89 L825.0 512.89 L829.0 512.71 L833.0 512.71 L837.0 512.63 L841.0 512.87 L845.0 512.70 L849.0 512.71 L853.0 512.97 L857.0 512.85 L861.0 512.83 L865.0 512.86 L869.0 512.84 L873.0 512.87 L877.0 512.73 L881.0 512.64 L885.0 512.64 L889.0 512.63 L893.0 512.75 L897.0 512.67 L901.0 512.66 L905.0 512.80 L909.0 512.97 L913.0 512.87 L917.0 512.72 L921.0 512.90 L925.0 512.68 L929.0 512.66 L933.0 512.73 L937.0 512.77 L941.0 512.47 L945.0 511.98 L949.0 511.68 L953.0 511.05 L957.0 510.96 L961.0 510.34 L965.0 510.49 L969.0 510.16 L973.0 510.42 L977.0 510.17 L981.0 510.36 L985.0 510.31 L989.0 510.23 L993.0 510.05 L997.0 509.92 L1001.0 509.96 L1005.0 510.18 L1009.0 509.88 L1013.0 510.02 L1017.0 509.96 L1021.0 509.96 L1025.0 509.75 L1029.0 509.71 L1033.0 509.65 L1037.0 509.94 L1041.0 509.69 L1045.0 509.75 L1049.0 509.81 L1053.0 509.76 L1057.0 509.78 L1061.0 509.85 L1065.0 510.23 L1069.0 510.05 L1073.0 510.43 L1077.0 510.29 L1081.0 510.50 L1085.0 510.37 L1089.0 510.68 L1093.0 510.51 L1097.0 510.55 L1101.0 510.61 L1105.0 510.46 L1109.0 510.51 L1113.0 510.71 L1117.0 510.52 L1121.0 510.36 L1125.0 510.10 L1129.0 509.50 L1133.0 509.09 L1137.0 508.70 L1141.0 508.36 L1145.0 508.27 L1149.0 508.38 L1153.0 508.34 L1157.0 508.50 L1161.0 508.23 L1165.0 508.47 L1169.0 508.55 L1173.0 508.35 L1177.0 508.30 L1181.0 508.46 L1185.0 508.37 L1189.0 508.51 L1193.0 508.62 L1197.0 508.42 L1201.0 508.44 L1205.0 508.59 L1209.0 508.50 L1213.0 508.54 L1217.0 508.64 L1221.0 508.54 L1225.0 508.54 L1229.0 508.66 L1233.0 508.72 L1237.0 508.91 L1241.0 508.79 L1245.0 508.64 L1249.0 508.71 L1253.0 508.92 L1257.0 508.87 L1261.0 509.00 L1265.0 509.05 L1269.0 509.03 L1273.0 508.78 L1277.0 509.10 L1281.0 508.97 L1285.0 508.89 L1289.0 508.88 L1293.0 509.15 L1297.0 508.93 L1301.0 508.91 L1305.0 508.99 L1309.0 509.25 L1313.0 509.10 L1317.0 509.22 L1321.0 509.00 L1325.0 509.15 L1329.0 509.12 L1333.0 509.10 L1337.0 509.29 L1341.0 509.20 L1345.0 509.13 L1349.0 509.46 L1353.0 509.30 L1357.0 509.21 L1361.0 509.17 L1365.0 509.42 L1369.0 509.39 L1373.0 509.23 L1377.0 509.41 L1381.0 509.52 L1385.0 509.47 L1389.0 509.38 L1393.0 509.49" fill="none" stroke="#9c6a82" stroke-width="1.1" stroke-linejoin="round"/><path d="M805.0 491.50 L809.0 491.97 L813.0 492.38 L817.0 492.93 L821.0 493.21 L825.0 493.03 L829.0 493.03 L833.0 493.18 L837.0 492.94 L841.0 493.14 L845.0 492.95 L849.0 492.94 L853.0 493.10 L857.0 492.97 L861.0 493.26 L865.0 493.24 L869.0 493.09 L873.0 492.99 L877.0 492.96 L881.0 493.10 L885.0 493.11 L889.0 493.05 L893.0 493.18 L897.0 493.11 L901.0 493.20 L905.0 492.96 L909.0 492.95 L913.0 493.06 L917.0 493.09 L921.0 493.01 L925.0 493.16 L929.0 493.00 L933.0 493.03 L937.0 493.09 L941.0 493.18 L945.0 493.20 L949.0 493.05 L953.0 493.08 L957.0 493.25 L961.0 493.26 L965.0 493.14 L969.0 492.96 L973.0 493.08 L977.0 493.15 L981.0 493.02 L985.0 492.93 L989.0 493.27 L993.0 493.25 L997.0 492.97 L1001.0 493.09 L1005.0 493.14 L1009.0 493.03 L1013.0 492.94 L1017.0 493.19 L1021.0 493.20 L1025.0 493.08 L1029.0 492.95 L1033.0 493.06 L1037.0 492.95 L1041.0 493.27 L1045.0 492.94 L1049.0 493.02 L1053.0 493.20 L1057.0 492.97 L1061.0 492.96 L1065.0 492.95 L1069.0 492.98 L1073.0 493.11 L1077.0 493.22 L1081.0 492.98 L1085.0 492.98 L1089.0 493.20 L1093.0 493.07 L1097.0 493.04 L1101.0 492.96 L1105.0 493.01 L1109.0 493.27 L1113.0 492.96 L1117.0 493.01 L1121.0 493.19 L1125.0 493.24 L1129.0 493.25 L1133.0 493.09 L1137.0 493.26 L1141.0 493.14 L1145.0 493.02 L1149.0 493.09 L1153.0 493.18 L1157.0 493.18 L1161.0 492.97 L1165.0 492.99 L1169.0 493.26 L1173.0 492.96 L1177.0 493.21 L1181.0 493.04 L1185.0 493.01 L1189.0 493.01 L1193.0 493.09 L1197.0 493.28 L1201.0 492.97 L1205.0 493.23 L1209.0 493.04 L1213.0 492.98 L1217.0 493.19 L1221.0 493.04 L1225.0 492.99 L1229.0 493.07 L1233.0 493.22 L1237.0 493.23 L1241.0 493.13 L1245.0 492.92 L1249.0 493.19 L1253.0 493.14 L1257.0 493.24 L1261.0 493.26 L1265.0 493.04 L1269.0 493.23 L1273.0 493.21 L1277.0 493.02 L1281.0 493.05 L1285.0 493.05 L1289.0 493.05 L1293.0 493.06 L1297.0 492.96 L1301.0 493.00 L1305.0 493.25 L1309.0 493.07 L1313.0 493.15 L1317.0 493.24 L1321.0 493.19 L1325.0 493.01 L1329.0 493.25 L1333.0 493.21 L1337.0 493.28 L1341.0 493.18 L1345.0 493.19 L1349.0 493.21 L1353.0 493.01 L1357.0 493.16 L1361.0 493.06 L1365.0 493.22 L1369.0 492.97 L1373.0 493.11 L1377.0 493.04 L1381.0 493.22 L1385.0 493.04 L1389.0 493.22 L1393.0 493.23" fill="none" stroke="#f2d281" stroke-width="1.1" stroke-linejoin="round"/><path d="M805.0 491.69 L809.0 492.35 L813.0 492.84 L817.0 493.40 L821.0 494.35 L825.0 494.91 L829.0 495.04 L833.0 495.36 L837.0 495.20 L841.0 495.39 L845.0 495.59 L849.0 495.74 L853.0 496.04 L857.0 495.95 L861.0 495.70 L865.0 495.65 L869.0 495.60 L873.0 495.68 L877.0 495.64 L881.0 495.69 L885.0 495.40 L889.0 495.56 L893.0 495.30 L897.0 495.22 L901.0 495.11 L905.0 495.03 L909.0 495.24 L913.0 495.18 L917.0 495.01 L921.0 494.76 L925.0 494.69 L929.0 494.30 L933.0 493.94 L937.0 493.65 L941.0 492.98 L945.0 493.00 L949.0 493.04 L953.0 492.79 L957.0 492.92 L961.0 493.03 L965.0 492.94 L969.0 492.88 L973.0 493.01 L977.0 492.90 L981.0 492.79 L985.0 492.79 L989.0 492.97 L993.0 492.93 L997.0 492.93 L1001.0 492.79 L1005.0 492.62 L1009.0 492.61 L1013.0 492.67 L1017.0 492.77 L1021.0 492.50 L1025.0 492.78 L1029.0 492.75 L1033.0 492.64 L1037.0 492.44 L1041.0 492.71 L1045.0 492.56 L1049.0 492.63 L1053.0 492.58 L1057.0 492.62 L1061.0 492.49 L1065.0 492.67 L1069.0 492.65 L1073.0 492.63 L1077.0 492.50 L1081.0 492.38 L1085.0 492.38 L1089.0 492.33 L1093.0 492.79 L1097.0 493.31 L1101.0 493.88 L1105.0 494.46 L1109.0 495.08 L1113.0 495.54 L1117.0 495.50 L1121.0 494.34 L1125.0 492.84 L1129.0 491.02 L1133.0 488.60 L1137.0 486.60 L1141.0 484.21 L1145.0 482.22 L1149.0 482.45 L1153.0 482.15 L1157.0 482.45 L1161.0 482.39 L1165.0 482.17 L1169.0 482.39 L1173.0 482.33 L1177.0 482.54 L1181.0 482.81 L1185.0 483.14 L1189.0 483.71 L1193.0 483.79 L1197.0 484.43 L1201.0 484.18 L1205.0 483.92 L1209.0 483.54 L1213.0 483.49 L1217.0 483.01 L1221.0 482.79 L1225.0 482.29 L1229.0 482.76 L1233.0 483.23 L1237.0 483.53 L1241.0 484.17 L1245.0 484.75 L1249.0 485.07 L1253.0 485.73 L1257.0 485.53 L1261.0 485.47 L1265.0 485.58 L1269.0 485.50 L1273.0 485.42 L1277.0 485.13 L1281.0 485.09 L1285.0 485.08 L1289.0 484.97 L1293.0 484.77 L1297.0 484.82 L1301.0 484.56 L1305.0 484.67 L1309.0 484.93 L1313.0 485.28 L1317.0 485.98 L1321.0 486.24 L1325.0 486.91 L1329.0 486.96 L1333.0 486.96 L1337.0 486.46 L1341.0 486.20 L1345.0 485.65 L1349.0 485.50 L1353.0 485.07 L1357.0 484.69 L1361.0 484.56 L1365.0 483.95 L1369.0 483.81 L1373.0 484.03 L1377.0 484.67 L1381.0 485.06 L1385.0 485.11 L1389.0 485.63 L1393.0 486.00" fill="none" stroke="#e3855a" stroke-width="1.1" stroke-linejoin="round"/><path d="M805.0 448.35 L809.0 448.48 L813.0 448.33 L817.0 448.58 L821.0 448.39 L825.0 448.24 L829.0 448.27 L833.0 448.50 L837.0 448.55 L841.0 448.47 L845.0 448.30 L849.0 448.56 L853.0 448.51 L857.0 448.30 L861.0 448.40 L865.0 448.50 L869.0 448.27 L873.0 448.28 L877.0 448.40 L881.0 448.59 L885.0 448.63 L889.0 448.39 L893.0 448.61 L897.0 448.57 L901.0 448.60 L905.0 448.50 L909.0 448.64 L913.0 448.53 L917.0 448.64 L921.0 448.50 L925.0 448.37 L929.0 448.49 L933.0 448.48 L937.0 448.43 L941.0 448.45 L945.0 448.50 L949.0 448.53 L953.0 448.40 L957.0 448.42 L961.0 448.51 L965.0 448.51 L969.0 448.48 L973.0 448.58 L977.0 448.41 L981.0 448.53 L985.0 448.44 L989.0 448.62 L993.0 448.60 L997.0 448.63 L1001.0 448.54 L1005.0 448.45 L1009.0 448.69 L1013.0 448.55 L1017.0 448.50 L1021.0 448.47 L1025.0 448.52 L1029.0 448.63 L1033.0 448.67 L1037.0 448.55 L1041.0 448.65 L1045.0 448.46 L1049.0 448.55 L1053.0 448.52 L1057.0 448.50 L1061.0 448.53 L1065.0 448.67 L1069.0 448.67 L1073.0 448.48 L1077.0 448.49 L1081.0 448.69 L1085.0 448.65 L1089.0 448.66 L1093.0 448.65 L1097.0 451.27 L1101.0 451.12 L1105.0 451.04 L1109.0 451.15 L1113.0 451.03 L1117.0 451.37 L1121.0 448.91 L1125.0 448.97 L1129.0 449.08 L1133.0 449.02 L1137.0 448.82 L1141.0 448.86 L1145.0 448.79 L1149.0 449.04 L1153.0 449.02 L1157.0 448.94 L1161.0 448.90 L1165.0 448.87 L1169.0 448.95 L1173.0 449.03 L1177.0 449.10 L1181.0 449.09 L1185.0 449.10 L1189.0 448.95 L1193.0 448.95 L1197.0 448.92 L1201.0 449.16 L1205.0 448.88 L1209.0 448.87 L1213.0 448.92 L1217.0 449.16 L1221.0 449.14 L1225.0 448.95 L1229.0 449.15 L1233.0 449.16 L1237.0 449.00 L1241.0 448.92 L1245.0 449.13 L1249.0 449.00 L1253.0 448.91 L1257.0 449.19 L1261.0 449.03 L1265.0 449.02 L1269.0 449.10 L1273.0 448.98 L1277.0 448.90 L1281.0 449.04 L1285.0 449.04 L1289.0 448.91 L1293.0 449.04 L1297.0 449.19 L1301.0 449.04 L1305.0 449.17 L1309.0 449.15 L1313.0 449.00 L1317.0 448.94 L1321.0 449.18 L1325.0 449.16 L1329.0 449.05 L1333.0 449.03 L1337.0 449.27 L1341.0 449.29 L1345.0 449.05 L1349.0 449.18 L1353.0 449.18 L1357.0 449.10 L1361.0 449.00 L1365.0 449.11 L1369.0 449.22 L1373.0 449.21 L1377.0 449.18 L1381.0 449.05 L1385.0 449.09 L1389.0 449.13 L1393.0 449.17" fill="none" stroke="#f4afc0" stroke-width="1.1" stroke-linejoin="round"/><path d="M805.0 429.91 L809.0 430.13 L813.0 430.66 L817.0 430.81 L821.0 431.29 L825.0 431.40 L829.0 431.53 L833.0 431.55 L837.0 431.45 L841.0 431.49 L845.0 431.34 L849.0 431.55 L853.0 430.77 L857.0 429.78 L861.0 429.92 L865.0 429.98 L869.0 429.76 L873.0 430.02 L877.0 430.03 L881.0 429.74 L885.0 429.81 L889.0 429.75 L893.0 429.81 L897.0 429.75 L901.0 429.90 L905.0 429.81 L909.0 429.83 L913.0 429.89 L917.0 429.85 L921.0 430.00 L925.0 429.98 L929.0 429.76 L933.0 429.80 L937.0 429.72 L941.0 429.84 L945.0 429.76 L949.0 429.97 L953.0 430.00 L957.0 430.08 L961.0 429.80 L965.0 429.73 L969.0 429.99 L973.0 429.87 L977.0 430.06 L981.0 429.86 L985.0 429.83 L989.0 429.75 L993.0 430.06 L997.0 429.90 L1001.0 429.88 L1005.0 429.88 L1009.0 430.00 L1013.0 430.02 L1017.0 429.89 L1021.0 429.78 L1025.0 429.87 L1029.0 430.04 L1033.0 429.87 L1037.0 429.96 L1041.0 429.92 L1045.0 429.89 L1049.0 429.93 L1053.0 429.81 L1057.0 429.92 L1061.0 430.03 L1065.0 429.75 L1069.0 429.85 L1073.0 430.04 L1077.0 430.07 L1081.0 429.72 L1085.0 429.95 L1089.0 429.95 L1093.0 430.02 L1097.0 434.49 L1101.0 434.37 L1105.0 434.43 L1109.0 434.58 L1113.0 434.58 L1117.0 434.39 L1121.0 430.25 L1125.0 430.25 L1129.0 430.25 L1133.0 430.02 L1137.0 430.16 L1141.0 430.12 L1145.0 430.21 L1149.0 430.11 L1153.0 430.04 L1157.0 430.23 L1161.0 430.08 L1165.0 430.26 L1169.0 430.08 L1173.0 430.17 L1177.0 430.26 L1181.0 430.00 L1185.0 430.22 L1189.0 429.98 L1193.0 430.29 L1197.0 429.96 L1201.0 430.20 L1205.0 430.07 L1209.0 430.00 L1213.0 430.07 L1217.0 430.11 L1221.0 430.07 L1225.0 429.96 L1229.0 431.16 L1233.0 431.43 L1237.0 431.67 L1241.0 431.46 L1245.0 431.48 L1249.0 431.40 L1253.0 431.67 L1257.0 431.44 L1261.0 431.55 L1265.0 431.62 L1269.0 431.46 L1273.0 430.93 L1277.0 430.33 L1281.0 430.28 L1285.0 430.27 L1289.0 430.43 L1293.0 430.60 L1297.0 430.37 L1301.0 430.47 L1305.0 430.60 L1309.0 430.43 L1313.0 430.40 L1317.0 430.55 L1321.0 430.53 L1325.0 430.73 L1329.0 430.72 L1333.0 430.50 L1337.0 430.63 L1341.0 430.59 L1345.0 430.47 L1349.0 430.63 L1353.0 430.81 L1357.0 430.60 L1361.0 430.72 L1365.0 430.78 L1369.0 430.56 L1373.0 430.88 L1377.0 430.60 L1381.0 430.68 L1385.0 430.85 L1389.0 430.61 L1393.0 430.75" fill="none" stroke="#6da0dc" stroke-width="1.1" stroke-linejoin="round"/><path d="M805.0 427.62 L809.0 427.83 L813.0 427.78 L817.0 428.08 L821.0 428.19 L825.0 428.33 L829.0 428.49 L833.0 428.44 L837.0 428.34 L841.0 428.42 L845.0 428.55 L849.0 428.42 L853.0 428.10 L857.0 427.52 L861.0 427.68 L865.0 427.33 L869.0 427.49 L873.0 427.52 L877.0 427.58 L881.0 427.67 L885.0 427.54 L889.0 427.49 L893.0 427.55 L897.0 427.51 L901.0 427.57 L905.0 427.66 L909.0 427.33 L913.0 427.44 L917.0 427.64 L921.0 427.34 L925.0 427.60 L929.0 427.33 L933.0 427.55 L937.0 427.61 L941.0 427.41 L945.0 427.46 L949.0 427.40 L953.0 427.57 L957.0 427.51 L961.0 427.54 L965.0 427.44 L969.0 427.53 L973.0 427.66 L977.0 427.60 L981.0 427.66 L985.0 427.41 L989.0 427.51 L993.0 427.46 L997.0 427.44 L1001.0 427.61 L1005.0 427.38 L1009.0 427.52 L1013.0 427.60 L1017.0 427.66 L1021.0 427.33 L1025.0 427.42 L1029.0 427.50 L1033.0 427.66 L1037.0 427.38 L1041.0 427.62 L1045.0 427.46 L1049.0 427.52 L1053.0 427.65 L1057.0 427.34 L1061.0 427.44 L1065.0 427.38 L1069.0 427.37 L1073.0 427.43 L1077.0 427.57 L1081.0 427.53 L1085.0 427.36 L1089.0 427.61 L1093.0 427.50 L1097.0 432.37 L1101.0 432.62 L1105.0 432.62 L1109.0 432.40 L1113.0 432.66 L1117.0 432.61 L1121.0 427.90 L1125.0 427.84 L1129.0 428.17 L1133.0 428.18 L1137.0 427.93 L1141.0 428.19 L1145.0 428.21 L1149.0 428.18 L1153.0 428.27 L1157.0 428.35 L1161.0 428.13 L1165.0 428.33 L1169.0 428.38 L1173.0 428.18 L1177.0 428.33 L1181.0 428.35 L1185.0 428.43 L1189.0 428.35 L1193.0 428.26 L1197.0 428.27 L1201.0 428.40 L1205.0 428.27 L1209.0 428.55 L1213.0 428.58 L1217.0 428.36 L1221.0 428.55 L1225.0 428.56 L1229.0 429.34 L1233.0 429.92 L1237.0 429.93 L1241.0 429.79 L1245.0 429.73 L1249.0 429.82 L1253.0 430.01 L1257.0 429.92 L1261.0 430.07 L1265.0 429.85 L1269.0 429.85 L1273.0 429.23 L1277.0 428.94 L1281.0 428.69 L1285.0 428.66 L1289.0 428.91 L1293.0 428.68 L1297.0 428.90 L1301.0 428.69 L1305.0 428.76 L1309.0 428.92 L1313.0 429.00 L1317.0 428.84 L1321.0 428.86 L1325.0 428.72 L1329.0 428.83 L1333.0 428.80 L1337.0 429.01 L1341.0 428.99 L1345.0 429.02 L1349.0 428.94 L1353.0 429.00 L1357.0 428.80 L1361.0 428.90 L1365.0 428.88 L1369.0 428.88 L1373.0 429.05 L1377.0 428.87 L1381.0 428.92 L1385.0 428.91 L1389.0 429.12 L1393.0 429.05" fill="none" stroke="#a597d6" stroke-width="1.1" stroke-linejoin="round"/><path d="M132 596.9 H723" stroke="#ebecf0" stroke-width="1"/><path d="M132 623.4 H723" stroke="#ebecf0" stroke-width="1"/><path d="M132 650.0 H723" stroke="#ebecf0" stroke-width="1"/><path d="M132 676.5 H723" stroke="#ebecf0" stroke-width="1"/><path d="M132.0 703.10 L134.0 703.10 L136.0 703.10 L138.0 703.10 L140.0 703.10 L142.0 703.10 L144.0 703.10 L146.0 703.10 L148.0 703.10 L150.0 703.10 L152.0 703.10 L154.0 703.10 L156.0 703.10 L158.0 703.10 L160.0 703.10 L162.0 703.10 L164.0 703.10 L166.0 703.10 L168.0 703.10 L170.0 703.10 L172.0 703.10 L174.0 703.10 L176.0 703.10 L178.0 703.10 L180.0 703.10 L182.0 703.10 L184.0 703.10 L186.0 703.10 L188.0 703.10 L190.0 703.10 L192.0 703.10 L194.0 703.10 L196.0 703.10 L198.0 703.10 L200.0 703.10 L202.0 703.10 L204.0 703.10 L206.0 703.10 L208.0 703.10 L210.0 703.10 L212.0 703.10 L214.0 703.10 L216.0 703.10 L218.0 703.10 L220.0 703.10 L222.0 703.10 L224.0 703.10 L226.0 703.10 L228.0 703.10 L230.0 703.10 L232.0 703.10 L234.0 703.10 L236.0 703.10 L238.0 703.10 L240.0 703.10 L242.0 703.10 L244.0 703.10 L246.0 703.10 L248.0 703.10 L250.0 703.10 L252.0 703.10 L254.0 703.10 L256.0 703.10 L258.0 703.10 L260.0 703.10 L262.0 703.10 L264.0 703.10 L266.0 703.10 L268.0 703.10 L270.0 703.10 L272.0 703.10 L274.0 703.10 L276.0 703.10 L278.0 703.10 L280.0 703.10 L282.0 703.10 L284.0 703.10 L286.0 703.10 L288.0 703.10 L290.0 703.10 L292.0 703.10 L294.0 703.10 L296.0 703.10 L298.0 703.10 L300.0 703.10 L302.0 703.10 L304.0 703.10 L306.0 703.10 L308.0 703.10 L310.0 703.10 L312.0 703.10 L314.0 703.10 L316.0 703.10 L318.0 703.10 L320.0 703.10 L322.0 703.10 L324.0 703.10 L326.0 703.10 L328.0 703.10 L330.0 703.10 L332.0 703.10 L334.0 703.10 L336.0 703.10 L338.0 703.10 L340.0 703.10 L342.0 703.10 L344.0 703.10 L346.0 703.10 L348.0 703.10 L350.0 703.10 L352.0 703.10 L354.0 703.10 L356.0 703.10 L358.0 703.10 L360.0 703.10 L362.0 703.10 L364.0 703.10 L366.0 703.10 L368.0 703.10 L370.0 703.10 L372.0 703.10 L374.0 703.10 L376.0 703.10 L378.0 703.10 L380.0 703.10 L382.0 703.10 L384.0 703.10 L386.0 703.10 L388.0 703.10 L390.0 703.10 L392.0 703.10 L394.0 703.10 L396.0 703.10 L398.0 703.10 L400.0 703.10 L402.0 703.10 L404.0 703.10 L406.0 703.10 L408.0 703.10 L410.0 703.10 L412.0 703.10 L414.0 703.10 L416.0 703.10 L418.0 703.10 L420.0 703.10 L422.0 703.10 L424.0 703.10 L426.0 703.10 L428.0 703.10 L430.0 703.10 L432.0 703.10 L434.0 703.10 L436.0 703.10 L438.0 703.10 L440.0 703.10 L442.0 703.10 L444.0 703.10 L446.0 703.10 L448.0 703.10 L450.0 703.10 L452.0 703.10 L454.0 703.10 L456.0 703.10 L458.0 703.10 L460.0 703.10 L462.0 703.10 L464.0 703.10 L466.0 703.10 L468.0 703.10 L470.0 703.10 L472.0 703.10 L474.0 703.10 L476.0 703.10 L478.0 703.10 L480.0 703.10 L482.0 703.10 L484.0 703.10 L486.0 703.10 L488.0 703.10 L490.0 703.10 L492.0 703.10 L494.0 703.10 L496.0 703.10 L498.0 703.10 L500.0 703.10 L502.0 703.10 L504.0 703.10 L506.0 703.10 L508.0 703.10 L510.0 703.10 L512.0 703.10 L514.0 703.10 L516.0 703.10 L518.0 703.10 L520.0 703.10 L522.0 703.10 L524.0 703.10 L526.0 703.10 L528.0 703.10 L530.0 703.10 L532.0 703.10 L534.0 703.10 L536.0 703.10 L538.0 703.10 L540.0 703.10 L542.0 703.10 L544.0 703.10 L546.0 703.10 L548.0 703.10 L550.0 703.10 L552.0 703.10 L554.0 703.10 L556.0 703.10 L558.0 703.10 L560.0 703.10 L562.0 703.10 L564.0 703.10 L566.0 703.10 L568.0 703.10 L570.0 703.10 L572.0 703.10 L574.0 703.10 L576.0 703.10 L578.0 703.10 L580.0 703.10 L582.0 703.10 L584.0 703.10 L586.0 703.10 L588.0 703.10 L590.0 703.10 L592.0 703.10 L594.0 703.10 L596.0 703.10 L598.0 703.10 L600.0 703.10 L602.0 703.10 L604.0 703.10 L606.0 703.10 L608.0 703.10 L610.0 703.10 L612.0 703.10 L614.0 703.10 L616.0 703.10 L618.0 703.10 L620.0 703.10 L622.0 703.10 L624.0 703.10 L626.0 703.10 L628.0 703.10 L630.0 703.10 L632.0 703.10 L634.0 703.10 L636.0 703.10 L638.0 703.10 L640.0 703.10 L642.0 703.10 L644.0 703.10 L646.0 703.10 L648.0 703.10 L650.0 703.10 L652.0 703.10 L654.0 703.10 L656.0 703.10 L658.0 703.10 L660.0 703.10 L662.0 703.10 L664.0 703.10 L666.0 703.10 L668.0 703.10 L670.0 703.10 L672.0 703.10 L674.0 703.10 L676.0 703.10 L678.0 703.10 L680.0 703.10 L682.0 703.10 L684.0 703.10 L686.0 703.10 L688.0 703.10 L690.0 703.10 L692.0 703.10 L694.0 703.10 L696.0 703.10 L698.0 703.10 L700.0 703.10 L702.0 703.10 L704.0 703.10 L706.0 703.10 L708.0 703.10 L710.0 703.10 L712.0 703.10 L714.0 703.10 L716.0 703.10 L718.0 703.10 L720.0 703.10 L722.0 703.10 L723.0 703.10" fill="none" stroke="#6b6f9b" stroke-width="1.2" stroke-linejoin="round"/><path d="M132.0 703.10 L134.0 703.04 L136.0 702.97 L138.0 702.90 L140.0 702.82 L142.0 702.76 L144.0 702.70 L146.0 702.66 L148.0 702.62 L150.0 702.60 L152.0 702.57 L154.0 702.54 L156.0 702.50 L158.0 702.44 L160.0 702.38 L162.0 702.31 L164.0 702.23 L166.0 702.16 L168.0 702.10 L170.0 702.05 L172.0 702.01 L174.0 701.98 L176.0 701.96 L178.0 701.93 L180.0 701.89 L182.0 701.85 L184.0 701.79 L186.0 701.72 L188.0 701.64 L190.0 701.57 L192.0 701.50 L194.0 701.45 L196.0 701.40 L198.0 701.37 L200.0 701.35 L202.0 701.32 L204.0 701.29 L206.0 701.25 L208.0 701.19 L210.0 701.12 L212.0 701.05 L214.0 700.98 L216.0 700.91 L218.0 700.85 L220.0 700.80 L222.0 700.76 L224.0 700.73 L226.0 700.71 L228.0 700.68 L230.0 700.64 L232.0 700.59 L234.0 700.53 L236.0 700.46 L238.0 700.39 L240.0 700.31 L242.0 700.25 L244.0 700.19 L246.0 700.15 L248.0 700.12 L250.0 700.10 L252.0 700.07 L254.0 700.04 L256.0 699.99 L258.0 699.94 L260.0 699.87 L262.0 699.80 L264.0 699.72 L266.0 699.65 L268.0 699.59 L270.0 699.55 L272.0 699.51 L274.0 699.48 L276.0 699.46 L278.0 699.43 L280.0 699.39 L282.0 699.34 L284.0 699.28 L286.0 699.20 L288.0 699.13 L290.0 699.06 L292.0 698.99 L294.0 698.94 L296.0 698.90 L298.0 698.87 L300.0 698.85 L302.0 698.82 L304.0 698.78 L306.0 698.74 L308.0 698.68 L310.0 698.61 L312.0 698.54 L314.0 698.47 L316.0 698.40 L318.0 698.34 L320.0 698.29 L322.0 698.26 L324.0 698.23 L326.0 698.21 L328.0 698.18 L330.0 698.14 L332.0 698.09 L334.0 698.02 L336.0 697.95 L338.0 697.87 L340.0 697.80 L342.0 697.74 L344.0 697.69 L346.0 697.65 L348.0 697.62 L350.0 697.59 L352.0 697.57 L354.0 697.53 L356.0 697.49 L358.0 697.43 L360.0 697.36 L362.0 697.28 L364.0 697.21 L366.0 697.14 L368.0 697.09 L370.0 697.04 L372.0 697.01 L374.0 696.98 L376.0 696.96 L378.0 696.93 L380.0 696.88 L382.0 696.83 L384.0 696.77 L386.0 696.69 L388.0 696.62 L390.0 696.55 L392.0 696.49 L394.0 696.44 L396.0 696.40 L398.0 696.37 L400.0 696.34 L402.0 696.32 L404.0 696.28 L406.0 696.23 L408.0 696.17 L410.0 696.10 L412.0 696.03 L414.0 695.95 L416.0 695.89 L418.0 695.83 L420.0 695.79 L422.0 695.76 L424.0 695.73 L426.0 695.71 L428.0 695.68 L430.0 695.64 L432.0 695.59 L434.0 695.52 L436.0 695.45 L438.0 695.38 L440.0 695.32 L442.0 695.26 L444.0 695.21 L446.0 695.18 L448.0 695.15 L450.0 695.12 L452.0 695.09 L454.0 695.06 L456.0 695.01 L458.0 694.95 L460.0 694.88 L462.0 694.80 L464.0 694.73 L466.0 694.66 L468.0 694.61 L470.0 694.56 L472.0 694.53 L474.0 694.51 L476.0 694.48 L478.0 694.45 L480.0 694.40 L482.0 694.35 L484.0 694.28 L486.0 694.21 L488.0 694.13 L490.0 694.06 L492.0 694.00 L494.0 693.95 L496.0 693.92 L498.0 693.89 L500.0 693.86 L502.0 693.83 L504.0 693.80 L506.0 693.75 L508.0 693.68 L510.0 693.61 L512.0 693.54 L514.0 693.46 L516.0 693.40 L518.0 693.34 L520.0 693.30 L522.0 693.27 L524.0 693.25 L526.0 693.22 L528.0 693.19 L530.0 693.14 L532.0 693.08 L534.0 693.02 L536.0 692.94 L538.0 692.87 L540.0 692.80 L542.0 692.74 L544.0 692.69 L546.0 692.66 L548.0 692.63 L550.0 692.60 L552.0 692.57 L554.0 692.53 L556.0 692.48 L558.0 692.42 L560.0 692.35 L562.0 692.27 L564.0 692.20 L566.0 692.14 L568.0 692.08 L570.0 692.04 L572.0 692.01 L574.0 691.99 L576.0 691.96 L578.0 691.93 L580.0 691.88 L582.0 691.82 L584.0 691.75 L586.0 691.68 L588.0 691.60 L590.0 691.53 L592.0 691.48 L594.0 691.43 L596.0 691.40 L598.0 691.37 L600.0 691.34 L602.0 691.31 L604.0 691.27 L606.0 691.22 L608.0 691.16 L610.0 691.08 L612.0 691.01 L614.0 690.94 L616.0 690.87 L618.0 690.82 L620.0 690.78 L622.0 690.75 L624.0 690.73 L626.0 690.70 L628.0 690.66 L630.0 690.62 L632.0 690.56 L634.0 690.49 L636.0 690.41 L638.0 690.34 L640.0 690.27 L642.0 690.21 L644.0 690.17 L646.0 690.14 L648.0 690.11 L650.0 690.08 L652.0 690.05 L654.0 690.01 L656.0 689.96 L658.0 689.89 L660.0 689.82 L662.0 689.74 L664.0 689.67 L666.0 689.61 L668.0 689.56 L670.0 689.52 L672.0 689.49 L674.0 689.47 L676.0 689.44 L678.0 689.40 L680.0 689.35 L682.0 689.29 L684.0 689.22 L686.0 689.15 L688.0 689.07 L690.0 689.01 L692.0 688.95 L694.0 688.91 L696.0 688.88 L698.0 688.85 L700.0 688.83 L702.0 688.79 L704.0 688.75 L706.0 688.69 L708.0 688.63 L710.0 688.55 L712.0 688.48 L714.0 688.41 L716.0 688.35 L718.0 688.30 L720.0 688.26 L722.0 688.23 L723.0 688.22" fill="none" stroke="#f2d281" stroke-width="1.2" stroke-linejoin="round"/><path d="M132.0 703.10 L134.0 703.05 L136.0 702.99 L138.0 702.93 L140.0 702.87 L142.0 702.81 L144.0 702.77 L146.0 702.74 L148.0 702.72 L150.0 702.70 L152.0 702.68 L154.0 702.66 L156.0 702.63 L158.0 702.60 L160.0 702.56 L162.0 702.51 L164.0 702.46 L166.0 702.42 L168.0 702.38 L170.0 702.35 L172.0 702.33 L174.0 702.31 L176.0 702.29 L178.0 702.28 L180.0 702.26 L182.0 702.23 L184.0 702.19 L186.0 702.15 L188.0 702.10 L190.0 702.06 L192.0 702.02 L194.0 701.98 L196.0 701.96 L198.0 701.94 L200.0 701.92 L202.0 701.91 L204.0 701.89 L206.0 701.86 L208.0 701.83 L210.0 701.78 L212.0 701.74 L214.0 701.69 L216.0 701.65 L218.0 701.61 L220.0 701.58 L222.0 701.55 L224.0 701.54 L226.0 701.52 L228.0 701.50 L230.0 701.48 L232.0 701.45 L234.0 701.41 L236.0 701.36 L238.0 701.31 L240.0 701.26 L242.0 701.22 L244.0 701.18 L246.0 701.16 L248.0 701.14 L250.0 701.12 L252.0 701.10 L254.0 701.08 L256.0 701.05 L258.0 701.01 L260.0 700.96 L262.0 700.91 L264.0 700.85 L266.0 700.80 L268.0 700.75 L270.0 700.72 L272.0 700.68 L274.0 700.65 L276.0 700.62 L278.0 700.59 L280.0 700.53 L282.0 700.46 L284.0 700.37 L286.0 700.25 L288.0 700.13 L290.0 700.00 L292.0 699.89 L294.0 699.79 L296.0 699.71 L298.0 699.66 L300.0 699.61 L302.0 699.56 L304.0 699.50 L306.0 699.42 L308.0 699.32 L310.0 699.19 L312.0 699.06 L314.0 698.93 L316.0 698.80 L318.0 698.70 L320.0 698.62 L322.0 698.56 L324.0 698.51 L326.0 698.46 L328.0 698.41 L330.0 698.34 L332.0 698.24 L334.0 698.13 L336.0 698.00 L338.0 697.87 L340.0 697.74 L342.0 697.62 L344.0 697.53 L346.0 697.46 L348.0 697.41 L350.0 697.36 L352.0 697.31 L354.0 697.24 L356.0 697.14 L358.0 697.02 L360.0 696.88 L362.0 696.73 L364.0 696.57 L366.0 696.43 L368.0 696.31 L370.0 696.22 L372.0 696.15 L374.0 696.09 L376.0 696.03 L378.0 695.97 L380.0 695.88 L382.0 695.76 L384.0 695.63 L386.0 695.48 L388.0 695.32 L390.0 695.18 L392.0 695.06 L394.0 694.96 L396.0 694.89 L398.0 694.83 L400.0 694.78 L402.0 694.73 L404.0 694.66 L406.0 694.57 L408.0 694.46 L410.0 694.32 L412.0 694.18 L414.0 694.04 L416.0 693.91 L418.0 693.80 L420.0 693.71 L422.0 693.65 L424.0 693.61 L426.0 693.56 L428.0 693.50 L430.0 693.42 L432.0 693.32 L434.0 693.20 L436.0 693.07 L438.0 692.93 L440.0 692.79 L442.0 692.68 L444.0 692.59 L446.0 692.52 L448.0 692.46 L450.0 692.40 L452.0 692.34 L454.0 692.26 L456.0 692.15 L458.0 692.01 L460.0 691.84 L462.0 691.66 L464.0 691.48 L466.0 691.32 L468.0 691.18 L470.0 691.07 L472.0 690.99 L474.0 690.92 L476.0 690.85 L478.0 690.76 L480.0 690.64 L482.0 690.49 L484.0 690.32 L486.0 690.12 L488.0 689.92 L490.0 689.73 L492.0 689.57 L494.0 689.44 L496.0 689.35 L498.0 689.27 L500.0 689.20 L502.0 689.12 L504.0 689.02 L506.0 688.88 L508.0 688.72 L510.0 688.52 L512.0 688.32 L514.0 688.12 L516.0 687.95 L518.0 687.80 L520.0 687.69 L522.0 687.61 L524.0 687.54 L526.0 687.47 L528.0 687.38 L530.0 687.26 L532.0 687.11 L534.0 686.93 L536.0 686.73 L538.0 686.53 L540.0 686.35 L542.0 686.19 L544.0 686.07 L546.0 685.98 L548.0 685.91 L550.0 685.84 L552.0 685.76 L554.0 685.66 L556.0 685.52 L558.0 685.36 L560.0 685.17 L562.0 684.97 L564.0 684.79 L566.0 684.62 L568.0 684.49 L570.0 684.39 L572.0 684.31 L574.0 684.24 L576.0 684.17 L578.0 684.09 L580.0 683.97 L582.0 683.82 L584.0 683.64 L586.0 683.45 L588.0 683.27 L590.0 683.09 L592.0 682.95 L594.0 682.83 L596.0 682.75 L598.0 682.68 L600.0 682.61 L602.0 682.54 L604.0 682.43 L606.0 682.30 L608.0 682.14 L610.0 681.95 L612.0 681.76 L614.0 681.58 L616.0 681.41 L618.0 681.28 L620.0 681.18 L622.0 681.11 L624.0 681.04 L626.0 680.97 L628.0 680.88 L630.0 680.75 L632.0 680.60 L634.0 680.42 L636.0 680.23 L638.0 680.04 L640.0 679.88 L642.0 679.74 L644.0 679.63 L646.0 679.55 L648.0 679.48 L650.0 679.42 L652.0 679.35 L654.0 679.24 L656.0 679.11 L658.0 678.95 L660.0 678.77 L662.0 678.59 L664.0 678.41 L666.0 678.26 L668.0 678.14 L670.0 678.04 L672.0 677.97 L674.0 677.91 L676.0 677.84 L678.0 677.74 L680.0 677.62 L682.0 677.47 L684.0 677.30 L686.0 677.11 L688.0 676.93 L690.0 676.76 L692.0 676.63 L694.0 676.53 L696.0 676.45 L698.0 676.39 L700.0 676.33 L702.0 676.25 L704.0 676.15 L706.0 676.02 L708.0 675.86 L710.0 675.69 L712.0 675.51 L714.0 675.34 L716.0 675.19 L718.0 675.08 L720.0 674.99 L722.0 674.92 L723.0 674.89" fill="none" stroke="#9c6a82" stroke-width="1.2" stroke-linejoin="round"/><path d="M132.0 703.10 L134.0 702.93 L136.0 702.73 L138.0 702.51 L140.0 702.30 L142.0 702.11 L144.0 701.95 L146.0 701.82 L148.0 701.72 L150.0 701.65 L152.0 701.57 L154.0 701.48 L156.0 701.36 L158.0 701.21 L160.0 701.02 L162.0 700.81 L164.0 700.59 L166.0 700.39 L168.0 700.21 L170.0 700.07 L172.0 699.96 L174.0 699.88 L176.0 699.81 L178.0 699.73 L180.0 699.62 L182.0 699.48 L184.0 699.31 L186.0 699.10 L188.0 698.89 L190.0 698.68 L192.0 698.49 L194.0 698.33 L196.0 698.20 L198.0 698.11 L200.0 698.04 L202.0 697.96 L204.0 697.87 L206.0 697.75 L208.0 697.59 L210.0 697.40 L212.0 697.18 L214.0 696.97 L216.0 696.77 L218.0 696.59 L220.0 696.45 L222.0 696.35 L224.0 696.27 L226.0 696.20 L228.0 696.11 L230.0 696.00 L232.0 695.86 L234.0 695.68 L236.0 695.48 L238.0 695.26 L240.0 695.05 L242.0 694.86 L244.0 694.71 L246.0 694.59 L248.0 694.50 L250.0 694.43 L252.0 694.35 L254.0 694.25 L256.0 694.13 L258.0 693.97 L260.0 693.77 L262.0 693.56 L264.0 693.34 L266.0 693.14 L268.0 692.97 L270.0 692.84 L272.0 692.74 L274.0 692.66 L276.0 692.58 L278.0 692.50 L280.0 692.39 L282.0 692.24 L284.0 692.06 L286.0 691.85 L288.0 691.64 L290.0 691.43 L292.0 691.24 L294.0 691.09 L296.0 690.98 L298.0 690.89 L300.0 690.82 L302.0 690.74 L304.0 690.64 L306.0 690.51 L308.0 690.34 L310.0 690.15 L312.0 689.93 L314.0 689.72 L316.0 689.52 L318.0 689.35 L320.0 689.22 L322.0 689.12 L324.0 689.05 L326.0 688.97 L328.0 688.89 L330.0 688.77 L332.0 688.62 L334.0 688.44 L336.0 688.23 L338.0 688.01 L340.0 687.80 L342.0 687.62 L344.0 687.48 L346.0 687.36 L348.0 687.28 L350.0 687.20 L352.0 687.13 L354.0 687.02 L356.0 686.89 L358.0 686.72 L360.0 686.52 L362.0 686.31 L364.0 686.09 L366.0 685.90 L368.0 685.74 L370.0 685.61 L372.0 685.51 L374.0 685.44 L376.0 685.36 L378.0 685.27 L380.0 685.15 L382.0 685.00 L384.0 684.81 L386.0 684.60 L388.0 684.39 L390.0 684.18 L392.0 684.00 L394.0 683.86 L396.0 683.75 L398.0 683.67 L400.0 683.59 L402.0 683.51 L404.0 683.41 L406.0 683.27 L408.0 683.10 L410.0 682.90 L412.0 682.68 L414.0 682.47 L416.0 682.28 L418.0 682.12 L420.0 681.99 L422.0 681.90 L424.0 681.83 L426.0 681.76 L428.0 681.67 L430.0 681.55 L432.0 681.40 L434.0 681.22 L436.0 681.02 L438.0 680.81 L440.0 680.62 L442.0 680.45 L444.0 680.32 L446.0 680.21 L448.0 680.13 L450.0 680.06 L452.0 679.98 L454.0 679.87 L456.0 679.73 L458.0 679.56 L460.0 679.36 L462.0 679.14 L464.0 678.93 L466.0 678.75 L468.0 678.59 L470.0 678.47 L472.0 678.38 L474.0 678.31 L476.0 678.23 L478.0 678.14 L480.0 678.01 L482.0 677.85 L484.0 677.66 L486.0 677.45 L488.0 677.24 L490.0 677.04 L492.0 676.87 L494.0 676.73 L496.0 676.63 L498.0 676.55 L500.0 676.48 L502.0 676.40 L504.0 676.29 L506.0 676.14 L508.0 675.97 L510.0 675.76 L512.0 675.55 L514.0 675.34 L516.0 675.16 L518.0 675.01 L520.0 674.89 L522.0 674.80 L524.0 674.73 L526.0 674.65 L528.0 674.56 L530.0 674.43 L532.0 674.27 L534.0 674.07 L536.0 673.86 L538.0 673.65 L540.0 673.45 L542.0 673.29 L544.0 673.15 L546.0 673.05 L548.0 672.98 L550.0 672.90 L552.0 672.82 L554.0 672.71 L556.0 672.56 L558.0 672.38 L560.0 672.18 L562.0 671.96 L564.0 671.76 L566.0 671.57 L568.0 671.43 L570.0 671.31 L572.0 671.23 L574.0 671.16 L576.0 671.08 L578.0 670.98 L580.0 670.85 L582.0 670.68 L584.0 670.49 L586.0 670.28 L588.0 670.07 L590.0 669.87 L592.0 669.71 L594.0 669.58 L596.0 669.48 L598.0 669.41 L600.0 669.34 L602.0 669.25 L604.0 669.13 L606.0 668.98 L608.0 668.80 L610.0 668.59 L612.0 668.38 L614.0 668.18 L616.0 668.00 L618.0 667.86 L620.0 667.75 L622.0 667.66 L624.0 667.59 L626.0 667.51 L628.0 667.41 L630.0 667.28 L632.0 667.11 L634.0 666.91 L636.0 666.70 L638.0 666.49 L640.0 666.30 L642.0 666.14 L644.0 666.02 L646.0 665.92 L648.0 665.85 L650.0 665.77 L652.0 665.68 L654.0 665.57 L656.0 665.41 L658.0 665.23 L660.0 665.02 L662.0 664.81 L664.0 664.61 L666.0 664.43 L668.0 664.29 L670.0 664.19 L672.0 664.10 L674.0 664.03 L676.0 663.95 L678.0 663.85 L680.0 663.71 L682.0 663.54 L684.0 663.34 L686.0 663.13 L688.0 662.92 L690.0 662.73 L692.0 662.58 L694.0 662.46 L696.0 662.36 L698.0 662.29 L700.0 662.22 L702.0 662.13 L704.0 662.00 L706.0 661.85 L708.0 661.66 L710.0 661.45 L712.0 661.24 L714.0 661.04 L716.0 660.87 L718.0 660.73 L720.0 660.63 L722.0 660.55 L723.0 660.52" fill="none" stroke="#f4afc0" stroke-width="1.2" stroke-linejoin="round"/><path d="M132.0 703.10 L134.0 702.90 L136.0 702.67 L138.0 702.42 L140.0 702.17 L142.0 701.95 L144.0 701.76 L146.0 701.62 L148.0 701.51 L150.0 701.42 L152.0 701.34 L154.0 701.23 L156.0 701.10 L158.0 700.92 L160.0 700.70 L162.0 700.46 L164.0 700.21 L166.0 699.98 L168.0 699.78 L170.0 699.61 L172.0 699.49 L174.0 699.39 L176.0 699.31 L178.0 699.22 L180.0 699.10 L182.0 698.93 L184.0 698.73 L186.0 698.50 L188.0 698.25 L190.0 698.00 L192.0 697.78 L194.0 697.60 L196.0 697.45 L198.0 697.35 L200.0 697.26 L202.0 697.17 L204.0 697.06 L206.0 696.92 L208.0 696.74 L210.0 696.51 L212.0 696.27 L214.0 696.02 L216.0 695.78 L218.0 695.58 L220.0 695.42 L222.0 695.30 L224.0 695.21 L226.0 695.12 L228.0 695.02 L230.0 694.90 L232.0 694.73 L234.0 694.53 L236.0 694.29 L238.0 694.04 L240.0 693.79 L242.0 693.58 L244.0 693.40 L246.0 693.26 L248.0 693.15 L250.0 693.07 L252.0 692.98 L254.0 692.87 L256.0 692.72 L258.0 692.53 L260.0 692.31 L262.0 692.06 L264.0 691.81 L266.0 691.58 L268.0 691.38 L270.0 691.22 L272.0 691.10 L274.0 691.01 L276.0 690.93 L278.0 690.83 L280.0 690.70 L282.0 690.53 L284.0 690.32 L286.0 690.08 L288.0 689.83 L290.0 689.59 L292.0 689.37 L294.0 689.20 L296.0 689.06 L298.0 688.96 L300.0 688.87 L302.0 688.78 L304.0 688.67 L306.0 688.52 L308.0 688.33 L310.0 688.10 L312.0 687.85 L314.0 687.60 L316.0 687.37 L318.0 687.18 L320.0 687.03 L322.0 686.91 L324.0 686.82 L326.0 686.73 L328.0 686.63 L330.0 686.50 L332.0 686.33 L334.0 686.11 L336.0 685.87 L338.0 685.62 L340.0 685.38 L342.0 685.17 L344.0 685.00 L346.0 684.87 L348.0 684.77 L350.0 684.68 L352.0 684.59 L354.0 684.47 L356.0 684.32 L358.0 684.12 L360.0 683.89 L362.0 683.64 L364.0 683.39 L366.0 683.17 L368.0 682.98 L370.0 682.83 L372.0 682.72 L374.0 682.63 L376.0 682.54 L378.0 682.44 L380.0 682.30 L382.0 682.12 L384.0 681.91 L386.0 681.66 L388.0 681.41 L390.0 681.17 L392.0 680.97 L394.0 680.80 L396.0 680.67 L398.0 680.57 L400.0 680.49 L402.0 680.40 L404.0 680.28 L406.0 680.12 L408.0 679.92 L410.0 679.68 L412.0 679.43 L414.0 679.18 L416.0 678.96 L418.0 678.78 L420.0 678.63 L422.0 678.53 L424.0 678.44 L426.0 678.36 L428.0 678.26 L430.0 678.13 L432.0 677.95 L434.0 677.75 L436.0 677.52 L438.0 677.28 L440.0 677.06 L442.0 676.87 L444.0 676.71 L446.0 676.60 L448.0 676.50 L450.0 676.42 L452.0 676.33 L454.0 676.20 L456.0 676.04 L458.0 675.84 L460.0 675.61 L462.0 675.36 L464.0 675.11 L466.0 674.90 L468.0 674.72 L470.0 674.58 L472.0 674.47 L474.0 674.39 L476.0 674.30 L478.0 674.19 L480.0 674.05 L482.0 673.86 L484.0 673.64 L486.0 673.40 L488.0 673.15 L490.0 672.92 L492.0 672.72 L494.0 672.57 L496.0 672.45 L498.0 672.36 L500.0 672.27 L502.0 672.18 L504.0 672.05 L506.0 671.88 L508.0 671.68 L510.0 671.44 L512.0 671.19 L514.0 670.95 L516.0 670.74 L518.0 670.56 L520.0 670.43 L522.0 670.33 L524.0 670.24 L526.0 670.15 L528.0 670.04 L530.0 669.89 L532.0 669.70 L534.0 669.48 L536.0 669.23 L538.0 668.99 L540.0 668.76 L542.0 668.57 L544.0 668.41 L546.0 668.30 L548.0 668.21 L550.0 668.12 L552.0 668.02 L554.0 667.90 L556.0 667.73 L558.0 667.52 L560.0 667.29 L562.0 667.05 L564.0 666.81 L566.0 666.61 L568.0 666.44 L570.0 666.31 L572.0 666.22 L574.0 666.13 L576.0 666.04 L578.0 665.93 L580.0 665.78 L582.0 665.60 L584.0 665.37 L586.0 665.13 L588.0 664.89 L590.0 664.67 L592.0 664.49 L594.0 664.34 L596.0 664.23 L598.0 664.14 L600.0 664.06 L602.0 663.96 L604.0 663.83 L606.0 663.66 L608.0 663.45 L610.0 663.21 L612.0 662.97 L614.0 662.74 L616.0 662.53 L618.0 662.37 L620.0 662.25 L622.0 662.15 L624.0 662.07 L626.0 661.98 L628.0 661.86 L630.0 661.71 L632.0 661.52 L634.0 661.29 L636.0 661.05 L638.0 660.81 L640.0 660.59 L642.0 660.41 L644.0 660.26 L646.0 660.16 L648.0 660.07 L650.0 659.99 L652.0 659.88 L654.0 659.75 L656.0 659.57 L658.0 659.36 L660.0 659.12 L662.0 658.88 L664.0 658.65 L666.0 658.45 L668.0 658.28 L670.0 658.16 L672.0 658.07 L674.0 657.99 L676.0 657.89 L678.0 657.78 L680.0 657.62 L682.0 657.42 L684.0 657.19 L686.0 656.95 L688.0 656.71 L690.0 656.49 L692.0 656.31 L694.0 656.17 L696.0 656.07 L698.0 655.98 L700.0 655.90 L702.0 655.79 L704.0 655.65 L706.0 655.47 L708.0 655.25 L710.0 655.01 L712.0 654.77 L714.0 654.54 L716.0 654.34 L718.0 654.18 L720.0 654.06 L722.0 653.97 L723.0 653.93" fill="none" stroke="#78ade0" stroke-width="1.2" stroke-linejoin="round"/><path d="M132.0 703.10 L134.0 702.88 L136.0 702.63 L138.0 702.36 L140.0 702.09 L142.0 701.85 L144.0 701.64 L146.0 701.49 L148.0 701.37 L150.0 701.27 L152.0 701.18 L154.0 701.07 L156.0 700.92 L158.0 700.72 L160.0 700.49 L162.0 700.22 L164.0 699.95 L166.0 699.70 L168.0 699.48 L170.0 699.30 L172.0 699.17 L174.0 699.06 L176.0 698.97 L178.0 698.87 L180.0 698.74 L182.0 698.56 L184.0 698.34 L186.0 698.08 L188.0 697.81 L190.0 697.54 L192.0 697.30 L194.0 697.10 L196.0 696.95 L198.0 696.83 L200.0 696.73 L202.0 696.64 L204.0 696.52 L206.0 696.37 L208.0 696.16 L210.0 695.92 L212.0 695.65 L214.0 695.38 L216.0 695.12 L218.0 694.90 L220.0 694.73 L222.0 694.60 L224.0 694.49 L226.0 694.40 L228.0 694.30 L230.0 694.16 L232.0 693.98 L234.0 693.75 L236.0 693.49 L238.0 693.22 L240.0 692.96 L242.0 692.72 L244.0 692.52 L246.0 692.37 L248.0 692.26 L250.0 692.16 L252.0 692.07 L254.0 691.95 L256.0 691.79 L258.0 691.58 L260.0 691.33 L262.0 691.06 L264.0 690.79 L266.0 690.54 L268.0 690.32 L270.0 690.15 L272.0 690.02 L274.0 689.92 L276.0 689.83 L278.0 689.72 L280.0 689.58 L282.0 689.40 L284.0 689.17 L286.0 688.91 L288.0 688.63 L290.0 688.37 L292.0 688.13 L294.0 687.94 L296.0 687.80 L298.0 687.69 L300.0 687.59 L302.0 687.49 L304.0 687.37 L306.0 687.20 L308.0 686.99 L310.0 686.75 L312.0 686.47 L314.0 686.20 L316.0 685.95 L318.0 685.74 L320.0 685.58 L322.0 685.45 L324.0 685.35 L326.0 685.26 L328.0 685.15 L330.0 685.00 L332.0 684.81 L334.0 684.58 L336.0 684.32 L338.0 684.04 L340.0 683.78 L342.0 683.55 L344.0 683.36 L346.0 683.22 L348.0 683.11 L350.0 683.02 L352.0 682.92 L354.0 682.79 L356.0 682.62 L358.0 682.41 L360.0 682.16 L362.0 681.89 L364.0 681.61 L366.0 681.37 L368.0 681.16 L370.0 681.00 L372.0 680.88 L374.0 680.78 L376.0 680.69 L378.0 680.57 L380.0 680.42 L382.0 680.23 L384.0 679.99 L386.0 679.73 L388.0 679.45 L390.0 679.19 L392.0 678.97 L394.0 678.79 L396.0 678.65 L398.0 678.54 L400.0 678.45 L402.0 678.35 L404.0 678.22 L406.0 678.04 L408.0 677.82 L410.0 677.57 L412.0 677.30 L414.0 677.03 L416.0 676.78 L418.0 676.58 L420.0 676.42 L422.0 676.31 L424.0 676.22 L426.0 676.13 L428.0 676.02 L430.0 675.87 L432.0 675.68 L434.0 675.46 L436.0 675.20 L438.0 674.94 L440.0 674.70 L442.0 674.49 L444.0 674.32 L446.0 674.20 L448.0 674.09 L450.0 674.00 L452.0 673.90 L454.0 673.77 L456.0 673.59 L458.0 673.37 L460.0 673.11 L462.0 672.84 L464.0 672.58 L466.0 672.34 L468.0 672.14 L470.0 671.99 L472.0 671.88 L474.0 671.78 L476.0 671.69 L478.0 671.57 L480.0 671.41 L482.0 671.21 L484.0 670.97 L486.0 670.70 L488.0 670.43 L490.0 670.18 L492.0 669.96 L494.0 669.79 L496.0 669.66 L498.0 669.56 L500.0 669.47 L502.0 669.36 L504.0 669.22 L506.0 669.04 L508.0 668.81 L510.0 668.56 L512.0 668.28 L514.0 668.02 L516.0 667.78 L518.0 667.59 L520.0 667.44 L522.0 667.33 L524.0 667.24 L526.0 667.14 L528.0 667.02 L530.0 666.85 L532.0 666.65 L534.0 666.40 L536.0 666.13 L538.0 665.86 L540.0 665.61 L542.0 665.39 L544.0 665.22 L546.0 665.10 L548.0 665.00 L550.0 664.90 L552.0 664.79 L554.0 664.65 L556.0 664.47 L558.0 664.24 L560.0 663.99 L562.0 663.72 L564.0 663.47 L566.0 663.24 L568.0 663.06 L570.0 662.92 L572.0 662.82 L574.0 662.72 L576.0 662.63 L578.0 662.51 L580.0 662.34 L582.0 662.14 L584.0 661.89 L586.0 661.63 L588.0 661.37 L590.0 661.13 L592.0 660.92 L594.0 660.76 L596.0 660.64 L598.0 660.55 L600.0 660.46 L602.0 660.35 L604.0 660.21 L606.0 660.02 L608.0 659.79 L610.0 659.53 L612.0 659.27 L614.0 659.01 L616.0 658.79 L618.0 658.61 L620.0 658.48 L622.0 658.37 L624.0 658.28 L626.0 658.18 L628.0 658.06 L630.0 657.89 L632.0 657.68 L634.0 657.43 L636.0 657.17 L638.0 656.90 L640.0 656.66 L642.0 656.46 L644.0 656.31 L646.0 656.19 L648.0 656.10 L650.0 656.01 L652.0 655.89 L654.0 655.75 L656.0 655.55 L658.0 655.32 L660.0 655.06 L662.0 654.79 L664.0 654.54 L666.0 654.32 L668.0 654.15 L670.0 654.01 L672.0 653.91 L674.0 653.82 L676.0 653.72 L678.0 653.59 L680.0 653.42 L682.0 653.20 L684.0 652.95 L686.0 652.68 L688.0 652.42 L690.0 652.19 L692.0 651.99 L694.0 651.84 L696.0 651.72 L698.0 651.63 L700.0 651.54 L702.0 651.42 L704.0 651.27 L706.0 651.07 L708.0 650.83 L710.0 650.57 L712.0 650.30 L714.0 650.05 L716.0 649.84 L718.0 649.67 L720.0 649.54 L722.0 649.44 L723.0 649.39" fill="none" stroke="#a597d6" stroke-width="1.2" stroke-linejoin="round"/><path d="M132.0 703.10 L134.0 702.80 L136.0 702.46 L138.0 702.09 L140.0 701.72 L142.0 701.39 L144.0 701.11 L146.0 700.90 L148.0 700.73 L150.0 700.60 L152.0 700.48 L154.0 700.32 L156.0 700.12 L158.0 699.85 L160.0 699.53 L162.0 699.17 L164.0 698.80 L166.0 698.46 L168.0 698.15 L170.0 697.91 L172.0 697.73 L174.0 697.59 L176.0 697.46 L178.0 697.32 L180.0 697.14 L182.0 696.90 L184.0 696.60 L186.0 696.25 L188.0 695.88 L190.0 695.52 L192.0 695.19 L194.0 694.91 L196.0 694.70 L198.0 694.54 L200.0 694.41 L202.0 694.28 L204.0 694.12 L206.0 693.91 L208.0 693.64 L210.0 693.31 L212.0 692.94 L214.0 692.57 L216.0 692.22 L218.0 691.92 L220.0 691.68 L222.0 691.50 L224.0 691.36 L226.0 691.24 L228.0 691.09 L230.0 690.91 L232.0 690.66 L234.0 690.35 L236.0 690.00 L238.0 689.63 L240.0 689.27 L242.0 688.94 L244.0 688.67 L246.0 688.47 L248.0 688.31 L250.0 688.19 L252.0 688.05 L254.0 687.89 L256.0 687.67 L258.0 687.39 L260.0 687.06 L262.0 686.69 L264.0 686.32 L266.0 685.97 L268.0 685.68 L270.0 685.45 L272.0 685.27 L274.0 685.13 L276.0 685.01 L278.0 684.86 L280.0 684.67 L282.0 684.42 L284.0 684.10 L286.0 683.75 L288.0 683.37 L290.0 683.01 L292.0 682.69 L294.0 682.43 L296.0 682.23 L298.0 682.08 L300.0 681.96 L302.0 681.82 L304.0 681.65 L306.0 681.43 L308.0 681.14 L310.0 680.80 L312.0 680.43 L314.0 680.06 L316.0 679.72 L318.0 679.43 L320.0 679.21 L322.0 679.04 L324.0 678.90 L326.0 678.78 L328.0 678.62 L330.0 678.43 L332.0 678.17 L334.0 677.85 L336.0 677.49 L338.0 677.12 L340.0 676.76 L342.0 676.45 L344.0 676.19 L346.0 676.00 L348.0 675.85 L350.0 675.72 L352.0 675.59 L354.0 675.41 L356.0 675.18 L358.0 674.89 L360.0 674.55 L362.0 674.17 L364.0 673.81 L366.0 673.47 L368.0 673.19 L370.0 672.97 L372.0 672.80 L374.0 672.67 L376.0 672.54 L378.0 672.39 L380.0 672.18 L382.0 671.92 L384.0 671.59 L386.0 671.23 L388.0 670.86 L390.0 670.50 L392.0 670.20 L394.0 669.95 L396.0 669.76 L398.0 669.62 L400.0 669.49 L402.0 669.35 L404.0 669.17 L406.0 668.93 L408.0 668.63 L410.0 668.29 L412.0 667.91 L414.0 667.55 L416.0 667.22 L418.0 666.94 L420.0 666.73 L422.0 666.57 L424.0 666.44 L426.0 666.32 L428.0 666.17 L430.0 665.97 L432.0 665.71 L434.0 665.40 L436.0 665.06 L438.0 664.70 L440.0 664.37 L442.0 664.08 L444.0 663.86 L446.0 663.68 L448.0 663.54 L450.0 663.42 L452.0 663.28 L454.0 663.09 L456.0 662.85 L458.0 662.55 L460.0 662.20 L462.0 661.83 L464.0 661.47 L466.0 661.15 L468.0 660.88 L470.0 660.67 L472.0 660.52 L474.0 660.39 L476.0 660.26 L478.0 660.10 L480.0 659.88 L482.0 659.61 L484.0 659.28 L486.0 658.91 L488.0 658.55 L490.0 658.20 L492.0 657.91 L494.0 657.67 L496.0 657.50 L498.0 657.36 L500.0 657.23 L502.0 657.09 L504.0 656.90 L506.0 656.65 L508.0 656.34 L510.0 655.99 L512.0 655.62 L514.0 655.26 L516.0 654.94 L518.0 654.68 L520.0 654.48 L522.0 654.33 L524.0 654.20 L526.0 654.07 L528.0 653.90 L530.0 653.68 L532.0 653.40 L534.0 653.06 L536.0 652.69 L538.0 652.32 L540.0 651.98 L542.0 651.69 L544.0 651.47 L546.0 651.29 L548.0 651.16 L550.0 651.03 L552.0 650.89 L554.0 650.69 L556.0 650.45 L558.0 650.14 L560.0 649.79 L562.0 649.42 L564.0 649.07 L566.0 648.77 L568.0 648.52 L570.0 648.32 L572.0 648.18 L574.0 648.05 L576.0 647.92 L578.0 647.75 L580.0 647.53 L582.0 647.25 L584.0 646.92 L586.0 646.56 L588.0 646.20 L590.0 645.87 L592.0 645.59 L594.0 645.37 L596.0 645.21 L598.0 645.08 L600.0 644.95 L602.0 644.80 L604.0 644.61 L606.0 644.35 L608.0 644.03 L610.0 643.67 L612.0 643.30 L614.0 642.95 L616.0 642.64 L618.0 642.39 L620.0 642.20 L622.0 642.05 L624.0 641.93 L626.0 641.79 L628.0 641.62 L630.0 641.39 L632.0 641.09 L634.0 640.75 L636.0 640.39 L638.0 640.03 L640.0 639.70 L642.0 639.43 L644.0 639.21 L646.0 639.05 L648.0 638.92 L650.0 638.80 L652.0 638.65 L654.0 638.44 L656.0 638.18 L658.0 637.85 L660.0 637.49 L662.0 637.12 L664.0 636.78 L666.0 636.47 L668.0 636.23 L670.0 636.05 L672.0 635.91 L674.0 635.78 L676.0 635.64 L678.0 635.46 L680.0 635.22 L682.0 634.93 L684.0 634.58 L686.0 634.21 L688.0 633.85 L690.0 633.53 L692.0 633.26 L694.0 633.05 L696.0 632.89 L698.0 632.76 L700.0 632.63 L702.0 632.47 L704.0 632.26 L706.0 631.99 L708.0 631.67 L710.0 631.30 L712.0 630.94 L714.0 630.59 L716.0 630.30 L718.0 630.06 L720.0 629.88 L722.0 629.74 L723.0 629.68" fill="none" stroke="#2f659c" stroke-width="1.2" stroke-linejoin="round"/><path d="M132.0 703.10 L134.0 702.78 L136.0 702.41 L138.0 702.01 L140.0 701.61 L142.0 701.25 L144.0 700.95 L146.0 700.72 L148.0 700.55 L150.0 700.41 L152.0 700.27 L154.0 700.10 L156.0 699.88 L158.0 699.60 L160.0 699.25 L162.0 698.86 L164.0 698.46 L166.0 698.09 L168.0 697.76 L170.0 697.50 L172.0 697.30 L174.0 697.15 L176.0 697.02 L178.0 696.87 L180.0 696.67 L182.0 696.41 L184.0 696.09 L186.0 695.71 L188.0 695.31 L190.0 694.92 L192.0 694.56 L194.0 694.27 L196.0 694.04 L198.0 693.87 L200.0 693.73 L202.0 693.59 L204.0 693.42 L206.0 693.19 L208.0 692.89 L210.0 692.53 L212.0 692.14 L214.0 691.74 L216.0 691.36 L218.0 691.04 L220.0 690.78 L222.0 690.59 L224.0 690.44 L226.0 690.30 L228.0 690.15 L230.0 689.94 L232.0 689.68 L234.0 689.35 L236.0 688.97 L238.0 688.56 L240.0 688.17 L242.0 687.82 L244.0 687.54 L246.0 687.31 L248.0 687.15 L250.0 687.01 L252.0 686.87 L254.0 686.69 L256.0 686.45 L258.0 686.15 L260.0 685.79 L262.0 685.39 L264.0 684.99 L266.0 684.62 L268.0 684.30 L270.0 684.05 L272.0 683.86 L274.0 683.72 L276.0 683.58 L278.0 683.42 L280.0 683.21 L282.0 682.94 L284.0 682.60 L286.0 682.22 L288.0 681.82 L290.0 681.43 L292.0 681.09 L294.0 680.80 L296.0 680.59 L298.0 680.43 L300.0 680.29 L302.0 680.14 L304.0 679.96 L306.0 679.72 L308.0 679.41 L310.0 679.04 L312.0 678.65 L314.0 678.25 L316.0 677.88 L318.0 677.57 L320.0 677.33 L322.0 677.14 L324.0 677.00 L326.0 676.86 L328.0 676.70 L330.0 676.48 L332.0 676.20 L334.0 675.86 L336.0 675.47 L338.0 675.07 L340.0 674.69 L342.0 674.35 L344.0 674.07 L346.0 673.86 L348.0 673.71 L350.0 673.57 L352.0 673.42 L354.0 673.23 L356.0 672.98 L358.0 672.67 L360.0 672.30 L362.0 671.90 L364.0 671.50 L366.0 671.14 L368.0 670.84 L370.0 670.60 L372.0 670.42 L374.0 670.28 L376.0 670.14 L378.0 669.97 L380.0 669.75 L382.0 669.47 L384.0 669.12 L386.0 668.73 L388.0 668.32 L390.0 667.94 L392.0 667.61 L394.0 667.34 L396.0 667.14 L398.0 666.98 L400.0 666.85 L402.0 666.70 L404.0 666.51 L406.0 666.25 L408.0 665.93 L410.0 665.55 L412.0 665.15 L414.0 664.76 L416.0 664.40 L418.0 664.10 L420.0 663.87 L422.0 663.70 L424.0 663.56 L426.0 663.43 L428.0 663.27 L430.0 663.05 L432.0 662.77 L434.0 662.43 L436.0 662.05 L438.0 661.67 L440.0 661.30 L442.0 660.99 L444.0 660.74 L446.0 660.55 L448.0 660.40 L450.0 660.27 L452.0 660.11 L454.0 659.92 L456.0 659.66 L458.0 659.33 L460.0 658.96 L462.0 658.56 L464.0 658.17 L466.0 657.83 L468.0 657.54 L470.0 657.32 L472.0 657.15 L474.0 657.01 L476.0 656.87 L478.0 656.70 L480.0 656.47 L482.0 656.17 L484.0 655.82 L486.0 655.42 L488.0 655.03 L490.0 654.66 L492.0 654.34 L494.0 654.09 L496.0 653.90 L498.0 653.75 L500.0 653.62 L502.0 653.46 L504.0 653.26 L506.0 652.99 L508.0 652.66 L510.0 652.28 L512.0 651.88 L514.0 651.50 L516.0 651.15 L518.0 650.87 L520.0 650.65 L522.0 650.49 L524.0 650.35 L526.0 650.21 L528.0 650.03 L530.0 649.79 L532.0 649.49 L534.0 649.13 L536.0 648.74 L538.0 648.34 L540.0 647.97 L542.0 647.66 L544.0 647.41 L546.0 647.23 L548.0 647.08 L550.0 646.95 L552.0 646.79 L554.0 646.58 L556.0 646.31 L558.0 645.98 L560.0 645.60 L562.0 645.21 L564.0 644.83 L566.0 644.49 L568.0 644.22 L570.0 644.01 L572.0 643.86 L574.0 643.72 L576.0 643.58 L578.0 643.40 L580.0 643.16 L582.0 642.85 L584.0 642.49 L586.0 642.10 L588.0 641.71 L590.0 641.36 L592.0 641.05 L594.0 640.82 L596.0 640.64 L598.0 640.50 L600.0 640.37 L602.0 640.21 L604.0 639.99 L606.0 639.71 L608.0 639.37 L610.0 638.99 L612.0 638.59 L614.0 638.21 L616.0 637.88 L618.0 637.61 L620.0 637.40 L622.0 637.25 L624.0 637.11 L626.0 636.97 L628.0 636.78 L630.0 636.53 L632.0 636.21 L634.0 635.84 L636.0 635.45 L638.0 635.06 L640.0 634.70 L642.0 634.40 L644.0 634.17 L646.0 634.00 L648.0 633.86 L650.0 633.72 L652.0 633.55 L654.0 633.33 L656.0 633.05 L658.0 632.70 L660.0 632.31 L662.0 631.91 L664.0 631.54 L666.0 631.21 L668.0 630.95 L670.0 630.75 L672.0 630.60 L674.0 630.47 L676.0 630.32 L678.0 630.12 L680.0 629.87 L682.0 629.55 L684.0 629.18 L686.0 628.78 L688.0 628.39 L690.0 628.04 L692.0 627.75 L694.0 627.52 L696.0 627.36 L698.0 627.22 L700.0 627.08 L702.0 626.91 L704.0 626.68 L706.0 626.39 L708.0 626.04 L710.0 625.65 L712.0 625.25 L714.0 624.88 L716.0 624.56 L718.0 624.31 L720.0 624.12 L722.0 623.97 L723.0 623.90" fill="none" stroke="#98d2ae" stroke-width="1.2" stroke-linejoin="round"/><path d="M132.0 703.10 L134.0 702.73 L136.0 702.30 L138.0 701.84 L140.0 701.38 L142.0 700.97 L144.0 700.62 L146.0 700.36 L148.0 700.16 L150.0 699.99 L152.0 699.84 L154.0 699.65 L156.0 699.40 L158.0 699.07 L160.0 698.68 L162.0 698.24 L164.0 697.79 L166.0 697.37 L168.0 697.00 L170.0 696.70 L172.0 696.48 L174.0 696.31 L176.0 696.16 L178.0 695.99 L180.0 695.77 L182.0 695.48 L184.0 695.11 L186.0 694.68 L188.0 694.23 L190.0 693.78 L192.0 693.38 L194.0 693.05 L196.0 692.79 L198.0 692.59 L200.0 692.44 L202.0 692.28 L204.0 692.08 L206.0 691.82 L208.0 691.49 L210.0 691.09 L212.0 690.64 L214.0 690.19 L216.0 689.76 L218.0 689.40 L220.0 689.11 L222.0 688.89 L224.0 688.72 L226.0 688.56 L228.0 688.39 L230.0 688.16 L232.0 687.86 L234.0 687.49 L236.0 687.06 L238.0 686.61 L240.0 686.17 L242.0 685.77 L244.0 685.45 L246.0 685.20 L248.0 685.01 L250.0 684.85 L252.0 684.69 L254.0 684.49 L256.0 684.23 L258.0 683.88 L260.0 683.47 L262.0 683.02 L264.0 682.55 L266.0 682.13 L268.0 681.76 L270.0 681.47 L272.0 681.26 L274.0 681.09 L276.0 680.93 L278.0 680.75 L280.0 680.51 L282.0 680.20 L284.0 679.81 L286.0 679.37 L288.0 678.91 L290.0 678.47 L292.0 678.07 L294.0 677.75 L296.0 677.50 L298.0 677.32 L300.0 677.16 L302.0 677.00 L304.0 676.79 L306.0 676.51 L308.0 676.16 L310.0 675.74 L312.0 675.29 L314.0 674.83 L316.0 674.41 L318.0 674.06 L320.0 673.78 L322.0 673.57 L324.0 673.41 L326.0 673.25 L328.0 673.07 L330.0 672.82 L332.0 672.50 L334.0 672.11 L336.0 671.67 L338.0 671.21 L340.0 670.77 L342.0 670.38 L344.0 670.06 L346.0 669.82 L348.0 669.64 L350.0 669.48 L352.0 669.31 L354.0 669.10 L356.0 668.81 L358.0 668.45 L360.0 668.02 L362.0 667.55 L364.0 667.09 L366.0 666.67 L368.0 666.32 L370.0 666.05 L372.0 665.84 L374.0 665.68 L376.0 665.52 L378.0 665.33 L380.0 665.08 L382.0 664.75 L384.0 664.35 L386.0 663.90 L388.0 663.44 L390.0 663.00 L392.0 662.62 L394.0 662.31 L396.0 662.07 L398.0 661.90 L400.0 661.74 L402.0 661.57 L404.0 661.34 L406.0 661.05 L408.0 660.67 L410.0 660.24 L412.0 659.77 L414.0 659.31 L416.0 658.90 L418.0 658.55 L420.0 658.28 L422.0 658.09 L424.0 657.93 L426.0 657.78 L428.0 657.59 L430.0 657.34 L432.0 657.02 L434.0 656.63 L436.0 656.20 L438.0 655.76 L440.0 655.35 L442.0 655.00 L444.0 654.72 L446.0 654.50 L448.0 654.33 L450.0 654.17 L452.0 654.00 L454.0 653.77 L456.0 653.46 L458.0 653.08 L460.0 652.63 L462.0 652.15 L464.0 651.68 L466.0 651.26 L468.0 650.91 L470.0 650.63 L472.0 650.42 L474.0 650.25 L476.0 650.08 L478.0 649.87 L480.0 649.58 L482.0 649.22 L484.0 648.78 L486.0 648.29 L488.0 647.80 L490.0 647.35 L492.0 646.96 L494.0 646.64 L496.0 646.41 L498.0 646.23 L500.0 646.06 L502.0 645.87 L504.0 645.62 L506.0 645.29 L508.0 644.88 L510.0 644.41 L512.0 643.92 L514.0 643.45 L516.0 643.02 L518.0 642.67 L520.0 642.41 L522.0 642.20 L524.0 642.04 L526.0 641.86 L528.0 641.64 L530.0 641.35 L532.0 640.97 L534.0 640.53 L536.0 640.04 L538.0 639.55 L540.0 639.10 L542.0 638.72 L544.0 638.42 L546.0 638.19 L548.0 638.01 L550.0 637.84 L552.0 637.65 L554.0 637.39 L556.0 637.05 L558.0 636.64 L560.0 636.17 L562.0 635.69 L564.0 635.22 L566.0 634.81 L568.0 634.48 L570.0 634.22 L572.0 634.03 L574.0 633.87 L576.0 633.70 L578.0 633.48 L580.0 633.18 L582.0 632.81 L584.0 632.38 L586.0 631.90 L588.0 631.43 L590.0 631.00 L592.0 630.63 L594.0 630.35 L596.0 630.13 L598.0 629.96 L600.0 629.80 L602.0 629.61 L604.0 629.35 L606.0 629.01 L608.0 628.59 L610.0 628.12 L612.0 627.64 L614.0 627.17 L616.0 626.77 L618.0 626.44 L620.0 626.19 L622.0 626.00 L624.0 625.84 L626.0 625.66 L628.0 625.43 L630.0 625.12 L632.0 624.74 L634.0 624.30 L636.0 623.82 L638.0 623.34 L640.0 622.92 L642.0 622.56 L644.0 622.28 L646.0 622.07 L648.0 621.91 L650.0 621.74 L652.0 621.54 L654.0 621.28 L656.0 620.94 L658.0 620.52 L660.0 620.05 L662.0 619.57 L664.0 619.12 L666.0 618.73 L668.0 618.41 L670.0 618.17 L672.0 617.99 L674.0 617.82 L676.0 617.64 L678.0 617.41 L680.0 617.10 L682.0 616.70 L684.0 616.25 L686.0 615.76 L688.0 615.28 L690.0 614.85 L692.0 614.49 L694.0 614.21 L696.0 614.00 L698.0 613.83 L700.0 613.66 L702.0 613.45 L704.0 613.18 L706.0 612.82 L708.0 612.39 L710.0 611.91 L712.0 611.43 L714.0 610.98 L716.0 610.60 L718.0 610.29 L720.0 610.06 L722.0 609.88 L723.0 609.80" fill="none" stroke="#e3855a" stroke-width="1.2" stroke-linejoin="round"/><path d="M804 597.4 H1396" stroke="#ebecf0" stroke-width="1"/><path d="M804 618.5 H1396" stroke="#ebecf0" stroke-width="1"/><path d="M804 639.7 H1396" stroke="#ebecf0" stroke-width="1"/><path d="M804 660.8 H1396" stroke="#ebecf0" stroke-width="1"/><path d="M804 682.0 H1396" stroke="#ebecf0" stroke-width="1"/><path d="M805.0 703.10 L807.0 703.10 L809.0 703.10 L811.0 703.10 L813.0 703.10 L815.0 703.10 L817.0 703.10 L819.0 703.10 L821.0 703.10 L823.0 703.10 L825.0 703.10 L827.0 703.10 L829.0 703.10 L831.0 703.10 L833.0 703.10 L835.0 703.10 L837.0 703.09 L839.0 703.09 L841.0 703.09 L843.0 703.09 L845.0 703.09 L847.0 703.09 L849.0 703.09 L851.0 703.09 L853.0 703.09 L855.0 703.09 L857.0 703.09 L859.0 703.09 L861.0 703.09 L863.0 703.09 L865.0 703.09 L867.0 703.09 L869.0 703.09 L871.0 703.09 L873.0 703.09 L875.0 703.09 L877.0 703.09 L879.0 703.09 L881.0 703.09 L883.0 703.09 L885.0 703.09 L887.0 703.09 L889.0 703.09 L891.0 703.09 L893.0 703.09 L895.0 703.09 L897.0 703.09 L899.0 703.09 L901.0 703.08 L903.0 703.08 L905.0 703.08 L907.0 703.08 L909.0 703.08 L911.0 703.08 L913.0 703.08 L915.0 703.08 L917.0 703.08 L919.0 703.08 L921.0 703.08 L923.0 703.08 L925.0 703.08 L927.0 703.08 L929.0 703.08 L931.0 703.08 L933.0 703.08 L935.0 703.08 L937.0 703.08 L939.0 703.08 L941.0 703.08 L943.0 703.08 L945.0 703.08 L947.0 703.08 L949.0 703.08 L951.0 703.08 L953.0 703.08 L955.0 703.08 L957.0 703.08 L959.0 703.08 L961.0 703.08 L963.0 703.07 L965.0 703.07 L967.0 703.07 L969.0 703.07 L971.0 703.07 L973.0 703.07 L975.0 703.07 L977.0 703.07 L979.0 703.07 L981.0 703.07 L983.0 703.07 L985.0 703.07 L987.0 703.07 L989.0 703.07 L991.0 703.07 L993.0 703.07 L995.0 703.07 L997.0 703.07 L999.0 703.07 L1001.0 703.07 L1003.0 703.07 L1005.0 703.07 L1007.0 703.07 L1009.0 703.07 L1011.0 703.07 L1013.0 703.07 L1015.0 703.07 L1017.0 703.07 L1019.0 703.07 L1021.0 703.07 L1023.0 703.07 L1025.0 703.07 L1027.0 703.07 L1029.0 703.06 L1031.0 703.06 L1033.0 703.06 L1035.0 703.06 L1037.0 703.06 L1039.0 703.06 L1041.0 703.06 L1043.0 703.06 L1045.0 703.06 L1047.0 703.06 L1049.0 703.06 L1051.0 703.06 L1053.0 703.06 L1055.0 703.06 L1057.0 703.06 L1059.0 703.06 L1061.0 703.06 L1063.0 703.06 L1065.0 703.06 L1067.0 703.06 L1069.0 703.06 L1071.0 703.06 L1073.0 703.06 L1075.0 703.06 L1077.0 703.06 L1079.0 703.06 L1081.0 703.06 L1083.0 703.06 L1085.0 703.06 L1087.0 703.06 L1089.0 703.06 L1091.0 703.05 L1093.0 703.05 L1095.0 703.05 L1097.0 703.05 L1099.0 703.05 L1101.0 703.05 L1103.0 703.05 L1105.0 703.05 L1107.0 703.05 L1109.0 703.05 L1111.0 703.05 L1113.0 703.05 L1115.0 703.05 L1117.0 703.05 L1119.0 703.05 L1121.0 703.05 L1123.0 703.05 L1125.0 703.05 L1127.0 703.05 L1129.0 703.05 L1131.0 703.05 L1133.0 703.05 L1135.0 703.05 L1137.0 703.05 L1139.0 703.05 L1141.0 703.05 L1143.0 703.05 L1145.0 703.05 L1147.0 703.05 L1149.0 703.05 L1151.0 703.05 L1153.0 703.05 L1155.0 703.05 L1157.0 703.04 L1159.0 703.04 L1161.0 703.04 L1163.0 703.04 L1165.0 703.04 L1167.0 703.04 L1169.0 703.04 L1171.0 703.04 L1173.0 703.04 L1175.0 703.04 L1177.0 703.04 L1179.0 703.04 L1181.0 703.04 L1183.0 703.04 L1185.0 703.04 L1187.0 703.04 L1189.0 703.04 L1191.0 703.04 L1193.0 703.04 L1195.0 703.04 L1197.0 703.04 L1199.0 703.04 L1201.0 703.04 L1203.0 703.04 L1205.0 703.04 L1207.0 703.04 L1209.0 703.04 L1211.0 703.04 L1213.0 703.04 L1215.0 703.04 L1217.0 703.04 L1219.0 703.03 L1221.0 703.03 L1223.0 703.03 L1225.0 703.03 L1227.0 703.03 L1229.0 703.03 L1231.0 703.03 L1233.0 703.03 L1235.0 703.03 L1237.0 703.03 L1239.0 703.03 L1241.0 703.03 L1243.0 703.03 L1245.0 703.03 L1247.0 703.03 L1249.0 703.03 L1251.0 703.03 L1253.0 703.03 L1255.0 703.03 L1257.0 703.03 L1259.0 703.03 L1261.0 703.03 L1263.0 703.03 L1265.0 703.03 L1267.0 703.03 L1269.0 703.03 L1271.0 703.03 L1273.0 703.03 L1275.0 703.03 L1277.0 703.03 L1279.0 703.03 L1281.0 703.03 L1283.0 703.03 L1285.0 703.02 L1287.0 703.02 L1289.0 703.02 L1291.0 703.02 L1293.0 703.02 L1295.0 703.02 L1297.0 703.02 L1299.0 703.02 L1301.0 703.02 L1303.0 703.02 L1305.0 703.02 L1307.0 703.02 L1309.0 703.02 L1311.0 703.02 L1313.0 703.02 L1315.0 703.02 L1317.0 703.02 L1319.0 703.02 L1321.0 703.02 L1323.0 703.02 L1325.0 703.02 L1327.0 703.02 L1329.0 703.02 L1331.0 703.02 L1333.0 703.02 L1335.0 703.02 L1337.0 703.02 L1339.0 703.02 L1341.0 703.02 L1343.0 703.02 L1345.0 703.02 L1347.0 703.02 L1349.0 703.01 L1351.0 703.01 L1353.0 703.01 L1355.0 703.01 L1357.0 703.01 L1359.0 703.01 L1361.0 703.01 L1363.0 703.01 L1365.0 703.01 L1367.0 703.01 L1369.0 703.01 L1371.0 703.01 L1373.0 703.01 L1375.0 703.01 L1377.0 703.01 L1379.0 703.01 L1381.0 703.01 L1383.0 703.01 L1385.0 703.01 L1387.0 703.01 L1389.0 703.01 L1391.0 703.01 L1393.0 703.01 L1395.0 703.01 L1395.0 703.01" fill="none" stroke="#336f86" stroke-width="1.6" stroke-linejoin="round"/><path d="M805.0 703.10 L807.0 703.09 L809.0 703.08 L811.0 703.07 L813.0 703.07 L815.0 703.06 L817.0 703.05 L819.0 703.04 L821.0 703.04 L823.0 703.04 L825.0 703.03 L827.0 703.03 L829.0 703.02 L831.0 703.02 L833.0 703.01 L835.0 703.00 L837.0 702.99 L839.0 702.98 L841.0 702.98 L843.0 702.97 L845.0 702.96 L847.0 702.96 L849.0 702.96 L851.0 702.95 L853.0 702.95 L855.0 702.94 L857.0 702.94 L859.0 702.93 L861.0 702.92 L863.0 702.91 L865.0 702.90 L867.0 702.89 L869.0 702.89 L871.0 702.88 L873.0 702.88 L875.0 702.88 L877.0 702.87 L879.0 702.87 L881.0 702.86 L883.0 702.85 L885.0 702.84 L887.0 702.84 L889.0 702.83 L891.0 702.82 L893.0 702.81 L895.0 702.81 L897.0 702.80 L899.0 702.80 L901.0 702.80 L903.0 702.79 L905.0 702.79 L907.0 702.78 L909.0 702.77 L911.0 702.76 L913.0 702.75 L915.0 702.74 L917.0 702.74 L919.0 702.73 L921.0 702.73 L923.0 702.73 L925.0 702.72 L927.0 702.72 L929.0 702.71 L931.0 702.71 L933.0 702.70 L935.0 702.69 L937.0 702.68 L939.0 702.67 L941.0 702.66 L943.0 702.65 L945.0 702.65 L947.0 702.64 L949.0 702.64 L951.0 702.63 L953.0 702.62 L955.0 702.61 L957.0 702.60 L959.0 702.58 L961.0 702.56 L963.0 702.54 L965.0 702.52 L967.0 702.50 L969.0 702.49 L971.0 702.48 L973.0 702.48 L975.0 702.47 L977.0 702.46 L979.0 702.45 L981.0 702.43 L983.0 702.41 L985.0 702.39 L987.0 702.37 L989.0 702.35 L991.0 702.33 L993.0 702.32 L995.0 702.31 L997.0 702.30 L999.0 702.29 L1001.0 702.29 L1003.0 702.27 L1005.0 702.26 L1007.0 702.24 L1009.0 702.22 L1011.0 702.19 L1013.0 702.17 L1015.0 702.15 L1017.0 702.14 L1019.0 702.13 L1021.0 702.12 L1023.0 702.11 L1025.0 702.10 L1027.0 702.09 L1029.0 702.08 L1031.0 702.06 L1033.0 702.04 L1035.0 702.01 L1037.0 701.99 L1039.0 701.97 L1041.0 701.95 L1043.0 701.94 L1045.0 701.93 L1047.0 701.92 L1049.0 701.91 L1051.0 701.90 L1053.0 701.89 L1055.0 701.87 L1057.0 701.85 L1059.0 701.83 L1061.0 701.81 L1063.0 701.79 L1065.0 701.77 L1067.0 701.75 L1069.0 701.74 L1071.0 701.73 L1073.0 701.73 L1075.0 701.72 L1077.0 701.71 L1079.0 701.70 L1081.0 701.68 L1083.0 701.66 L1085.0 701.64 L1087.0 701.62 L1089.0 701.60 L1091.0 701.59 L1093.0 701.58 L1095.0 701.57 L1097.0 701.56 L1099.0 701.56 L1101.0 701.55 L1103.0 701.54 L1105.0 701.52 L1107.0 701.51 L1109.0 701.49 L1111.0 701.47 L1113.0 701.45 L1115.0 701.43 L1117.0 701.42 L1119.0 701.41 L1121.0 701.40 L1123.0 701.40 L1125.0 701.39 L1127.0 701.38 L1129.0 701.36 L1131.0 701.34 L1133.0 701.31 L1135.0 701.29 L1137.0 701.26 L1139.0 701.24 L1141.0 701.21 L1143.0 701.20 L1145.0 701.18 L1147.0 701.17 L1149.0 701.16 L1151.0 701.15 L1153.0 701.13 L1155.0 701.11 L1157.0 701.08 L1159.0 701.05 L1161.0 701.02 L1163.0 701.00 L1165.0 700.97 L1167.0 700.95 L1169.0 700.94 L1171.0 700.93 L1173.0 700.92 L1175.0 700.91 L1177.0 700.89 L1179.0 700.87 L1181.0 700.85 L1183.0 700.82 L1185.0 700.79 L1187.0 700.76 L1189.0 700.74 L1191.0 700.72 L1193.0 700.70 L1195.0 700.69 L1197.0 700.68 L1199.0 700.67 L1201.0 700.66 L1203.0 700.64 L1205.0 700.62 L1207.0 700.59 L1209.0 700.56 L1211.0 700.53 L1213.0 700.51 L1215.0 700.48 L1217.0 700.47 L1219.0 700.45 L1221.0 700.44 L1223.0 700.43 L1225.0 700.42 L1227.0 700.41 L1229.0 700.39 L1231.0 700.36 L1233.0 700.34 L1235.0 700.31 L1237.0 700.28 L1239.0 700.26 L1241.0 700.24 L1243.0 700.22 L1245.0 700.21 L1247.0 700.20 L1249.0 700.19 L1251.0 700.18 L1253.0 700.16 L1255.0 700.14 L1257.0 700.11 L1259.0 700.09 L1261.0 700.06 L1263.0 700.03 L1265.0 700.01 L1267.0 700.00 L1269.0 699.98 L1271.0 699.97 L1273.0 699.96 L1275.0 699.95 L1277.0 699.94 L1279.0 699.92 L1281.0 699.90 L1283.0 699.87 L1285.0 699.84 L1287.0 699.82 L1289.0 699.79 L1291.0 699.78 L1293.0 699.76 L1295.0 699.75 L1297.0 699.74 L1299.0 699.73 L1301.0 699.72 L1303.0 699.70 L1305.0 699.68 L1307.0 699.66 L1309.0 699.63 L1311.0 699.60 L1313.0 699.58 L1315.0 699.56 L1317.0 699.55 L1319.0 699.53 L1321.0 699.52 L1323.0 699.52 L1325.0 699.50 L1327.0 699.49 L1329.0 699.47 L1331.0 699.45 L1333.0 699.42 L1335.0 699.40 L1337.0 699.37 L1339.0 699.35 L1341.0 699.33 L1343.0 699.32 L1345.0 699.31 L1347.0 699.30 L1349.0 699.29 L1351.0 699.28 L1353.0 699.26 L1355.0 699.24 L1357.0 699.22 L1359.0 699.19 L1361.0 699.17 L1363.0 699.15 L1365.0 699.13 L1367.0 699.11 L1369.0 699.10 L1371.0 699.09 L1373.0 699.09 L1375.0 699.07 L1377.0 699.06 L1379.0 699.04 L1381.0 699.02 L1383.0 698.99 L1385.0 698.97 L1387.0 698.95 L1389.0 698.93 L1391.0 698.91 L1393.0 698.90 L1395.0 698.89 L1395.0 698.89" fill="none" stroke="#9c6a82" stroke-width="1.2" stroke-linejoin="round"/><path d="M805.0 703.10 L807.0 703.01 L809.0 702.91 L811.0 702.81 L813.0 702.71 L815.0 702.61 L817.0 702.53 L819.0 702.48 L821.0 702.43 L823.0 702.40 L825.0 702.36 L827.0 702.32 L829.0 702.26 L831.0 702.19 L833.0 702.10 L835.0 702.00 L837.0 701.90 L839.0 701.80 L841.0 701.72 L843.0 701.66 L845.0 701.60 L847.0 701.57 L849.0 701.53 L851.0 701.49 L853.0 701.44 L855.0 701.38 L857.0 701.30 L859.0 701.20 L861.0 701.10 L863.0 701.00 L865.0 700.91 L867.0 700.84 L869.0 700.78 L871.0 700.74 L873.0 700.70 L875.0 700.67 L877.0 700.62 L879.0 700.57 L881.0 700.49 L883.0 700.40 L885.0 700.30 L887.0 700.20 L889.0 700.11 L891.0 700.03 L893.0 699.96 L895.0 699.91 L897.0 699.87 L899.0 699.84 L901.0 699.80 L903.0 699.75 L905.0 699.68 L907.0 699.60 L909.0 699.50 L911.0 699.40 L913.0 699.30 L915.0 699.22 L917.0 699.14 L919.0 699.09 L921.0 699.05 L923.0 699.01 L925.0 698.97 L927.0 698.93 L929.0 698.87 L931.0 698.79 L933.0 698.70 L935.0 698.60 L937.0 698.50 L939.0 698.41 L941.0 698.33 L943.0 698.27 L945.0 698.22 L947.0 698.18 L949.0 698.15 L951.0 698.11 L953.0 698.05 L955.0 697.99 L957.0 697.90 L959.0 697.80 L961.0 697.70 L963.0 697.61 L965.0 697.52 L967.0 697.45 L969.0 697.39 L971.0 697.35 L973.0 697.32 L975.0 697.28 L977.0 697.24 L979.0 697.17 L981.0 697.10 L983.0 697.00 L985.0 696.90 L987.0 696.80 L989.0 696.71 L991.0 696.63 L993.0 696.57 L995.0 696.53 L997.0 696.49 L999.0 696.45 L1001.0 696.41 L1003.0 696.36 L1005.0 696.29 L1007.0 696.20 L1009.0 696.11 L1011.0 696.00 L1013.0 695.91 L1015.0 695.82 L1017.0 695.75 L1019.0 695.70 L1021.0 695.66 L1023.0 695.63 L1025.0 695.59 L1027.0 695.54 L1029.0 695.48 L1031.0 695.40 L1033.0 695.31 L1035.0 695.20 L1037.0 695.10 L1039.0 695.01 L1041.0 694.94 L1043.0 694.88 L1045.0 694.83 L1047.0 694.80 L1049.0 694.76 L1051.0 694.72 L1053.0 694.66 L1055.0 694.59 L1057.0 694.50 L1059.0 694.41 L1061.0 694.30 L1063.0 694.21 L1065.0 694.12 L1067.0 694.06 L1069.0 694.01 L1071.0 693.97 L1073.0 693.93 L1075.0 693.90 L1077.0 693.85 L1079.0 693.78 L1081.0 693.70 L1083.0 693.61 L1085.0 693.51 L1087.0 693.41 L1089.0 693.32 L1091.0 693.24 L1093.0 693.18 L1095.0 693.14 L1097.0 693.10 L1099.0 693.07 L1101.0 693.03 L1103.0 692.97 L1105.0 692.90 L1107.0 692.81 L1109.0 692.71 L1111.0 692.61 L1113.0 692.51 L1115.0 692.43 L1117.0 692.36 L1119.0 692.31 L1121.0 692.27 L1123.0 692.24 L1125.0 692.20 L1127.0 692.15 L1129.0 692.09 L1131.0 692.00 L1133.0 691.91 L1135.0 691.81 L1137.0 691.71 L1139.0 691.62 L1141.0 691.55 L1143.0 691.49 L1145.0 691.45 L1147.0 691.41 L1149.0 691.38 L1151.0 691.33 L1153.0 691.27 L1155.0 691.20 L1157.0 691.11 L1159.0 691.01 L1161.0 690.91 L1163.0 690.81 L1165.0 690.73 L1167.0 690.67 L1169.0 690.62 L1171.0 690.58 L1173.0 690.55 L1175.0 690.51 L1177.0 690.46 L1179.0 690.39 L1181.0 690.31 L1183.0 690.21 L1185.0 690.11 L1187.0 690.01 L1189.0 689.92 L1191.0 689.85 L1193.0 689.80 L1195.0 689.75 L1197.0 689.72 L1199.0 689.68 L1201.0 689.64 L1203.0 689.58 L1205.0 689.50 L1207.0 689.41 L1209.0 689.31 L1211.0 689.21 L1213.0 689.12 L1215.0 689.04 L1217.0 688.97 L1219.0 688.93 L1221.0 688.89 L1223.0 688.86 L1225.0 688.82 L1227.0 688.76 L1229.0 688.69 L1231.0 688.61 L1233.0 688.51 L1235.0 688.41 L1237.0 688.31 L1239.0 688.23 L1241.0 688.16 L1243.0 688.10 L1245.0 688.06 L1247.0 688.03 L1249.0 687.99 L1251.0 687.94 L1253.0 687.88 L1255.0 687.80 L1257.0 687.71 L1259.0 687.61 L1261.0 687.51 L1263.0 687.42 L1265.0 687.34 L1267.0 687.28 L1269.0 687.23 L1271.0 687.20 L1273.0 687.16 L1275.0 687.12 L1277.0 687.07 L1279.0 687.00 L1281.0 686.91 L1283.0 686.81 L1285.0 686.71 L1287.0 686.61 L1289.0 686.53 L1291.0 686.46 L1293.0 686.41 L1295.0 686.37 L1297.0 686.33 L1299.0 686.30 L1301.0 686.25 L1303.0 686.19 L1305.0 686.11 L1307.0 686.01 L1309.0 685.91 L1311.0 685.81 L1313.0 685.72 L1315.0 685.64 L1317.0 685.59 L1319.0 685.54 L1321.0 685.51 L1323.0 685.47 L1325.0 685.43 L1327.0 685.37 L1329.0 685.30 L1331.0 685.21 L1333.0 685.11 L1335.0 685.01 L1337.0 684.91 L1339.0 684.83 L1341.0 684.77 L1343.0 684.71 L1345.0 684.68 L1347.0 684.64 L1349.0 684.60 L1351.0 684.55 L1353.0 684.49 L1355.0 684.41 L1357.0 684.31 L1359.0 684.21 L1361.0 684.11 L1363.0 684.02 L1365.0 683.95 L1367.0 683.89 L1369.0 683.85 L1371.0 683.81 L1373.0 683.78 L1375.0 683.73 L1377.0 683.68 L1379.0 683.60 L1381.0 683.51 L1383.0 683.41 L1385.0 683.31 L1387.0 683.22 L1389.0 683.14 L1391.0 683.07 L1393.0 683.02 L1395.0 682.98 L1395.0 682.98" fill="none" stroke="#f2d281" stroke-width="1.2" stroke-linejoin="round"/><path d="M805.0 703.10 L807.0 703.01 L809.0 702.92 L811.0 702.81 L813.0 702.71 L815.0 702.62 L817.0 702.55 L819.0 702.49 L821.0 702.45 L823.0 702.41 L825.0 702.38 L827.0 702.34 L829.0 702.29 L831.0 702.23 L833.0 702.15 L835.0 702.06 L837.0 701.97 L839.0 701.88 L841.0 701.81 L843.0 701.75 L845.0 701.70 L847.0 701.67 L849.0 701.64 L851.0 701.61 L853.0 701.56 L855.0 701.51 L857.0 701.44 L859.0 701.35 L861.0 701.26 L863.0 701.18 L865.0 701.10 L867.0 701.03 L869.0 700.98 L871.0 700.95 L873.0 700.91 L875.0 700.88 L877.0 700.85 L879.0 700.79 L881.0 700.73 L883.0 700.65 L885.0 700.56 L887.0 700.47 L889.0 700.38 L891.0 700.31 L893.0 700.25 L895.0 700.21 L897.0 700.18 L899.0 700.14 L901.0 700.11 L903.0 700.06 L905.0 700.00 L907.0 699.93 L909.0 699.84 L911.0 699.75 L913.0 699.66 L915.0 699.58 L917.0 699.51 L919.0 699.46 L921.0 699.42 L923.0 699.39 L925.0 699.36 L927.0 699.31 L929.0 699.26 L931.0 699.19 L933.0 699.10 L935.0 699.00 L937.0 698.91 L939.0 698.81 L941.0 698.73 L943.0 698.67 L945.0 698.62 L947.0 698.58 L949.0 698.55 L951.0 698.51 L953.0 698.46 L955.0 698.39 L957.0 698.30 L959.0 698.21 L961.0 698.10 L963.0 698.00 L965.0 697.92 L967.0 697.85 L969.0 697.79 L971.0 697.75 L973.0 697.71 L975.0 697.68 L977.0 697.63 L979.0 697.57 L981.0 697.49 L983.0 697.40 L985.0 697.30 L987.0 697.19 L989.0 697.10 L991.0 697.02 L993.0 696.96 L995.0 696.91 L997.0 696.87 L999.0 696.84 L1001.0 696.80 L1003.0 696.74 L1005.0 696.67 L1007.0 696.58 L1009.0 696.49 L1011.0 696.38 L1013.0 696.28 L1015.0 696.20 L1017.0 696.13 L1019.0 696.07 L1021.0 696.03 L1023.0 696.00 L1025.0 695.96 L1027.0 695.91 L1029.0 695.85 L1031.0 695.77 L1033.0 695.67 L1035.0 695.57 L1037.0 695.47 L1039.0 695.37 L1041.0 695.29 L1043.0 695.23 L1045.0 695.19 L1047.0 695.15 L1049.0 695.11 L1051.0 695.07 L1053.0 695.01 L1055.0 694.94 L1057.0 694.85 L1059.0 694.75 L1061.0 694.65 L1063.0 694.55 L1065.0 694.46 L1067.0 694.39 L1069.0 694.34 L1071.0 694.30 L1073.0 694.26 L1075.0 694.22 L1077.0 694.17 L1079.0 694.11 L1081.0 694.02 L1083.0 693.93 L1085.0 693.82 L1087.0 693.72 L1089.0 693.63 L1091.0 693.55 L1093.0 693.49 L1095.0 693.45 L1097.0 693.41 L1099.0 693.38 L1101.0 693.33 L1103.0 693.28 L1105.0 693.21 L1107.0 693.13 L1109.0 693.04 L1111.0 692.94 L1113.0 692.86 L1115.0 692.79 L1117.0 692.73 L1119.0 692.68 L1121.0 692.65 L1123.0 692.61 L1125.0 692.58 L1127.0 692.52 L1129.0 692.45 L1131.0 692.36 L1133.0 692.25 L1135.0 692.12 L1137.0 691.99 L1139.0 691.87 L1141.0 691.77 L1143.0 691.69 L1145.0 691.62 L1147.0 691.57 L1149.0 691.52 L1151.0 691.45 L1153.0 691.37 L1155.0 691.25 L1157.0 691.12 L1159.0 690.97 L1161.0 690.82 L1163.0 690.68 L1165.0 690.56 L1167.0 690.46 L1169.0 690.39 L1171.0 690.33 L1173.0 690.28 L1175.0 690.22 L1177.0 690.14 L1179.0 690.04 L1181.0 689.92 L1183.0 689.78 L1185.0 689.63 L1187.0 689.49 L1189.0 689.36 L1191.0 689.26 L1193.0 689.18 L1195.0 689.12 L1197.0 689.07 L1199.0 689.02 L1201.0 688.96 L1203.0 688.87 L1205.0 688.76 L1207.0 688.63 L1209.0 688.49 L1211.0 688.34 L1213.0 688.21 L1215.0 688.09 L1217.0 688.00 L1219.0 687.93 L1221.0 687.88 L1223.0 687.83 L1225.0 687.77 L1227.0 687.69 L1229.0 687.59 L1231.0 687.46 L1233.0 687.32 L1235.0 687.17 L1237.0 687.03 L1239.0 686.91 L1241.0 686.81 L1243.0 686.74 L1245.0 686.68 L1247.0 686.63 L1249.0 686.58 L1251.0 686.52 L1253.0 686.43 L1255.0 686.33 L1257.0 686.20 L1259.0 686.07 L1261.0 685.93 L1263.0 685.81 L1265.0 685.71 L1267.0 685.62 L1269.0 685.56 L1271.0 685.51 L1273.0 685.46 L1275.0 685.41 L1277.0 685.33 L1279.0 685.24 L1281.0 685.12 L1283.0 684.98 L1285.0 684.84 L1287.0 684.71 L1289.0 684.59 L1291.0 684.50 L1293.0 684.43 L1295.0 684.37 L1297.0 684.33 L1299.0 684.27 L1301.0 684.21 L1303.0 684.12 L1305.0 684.01 L1307.0 683.88 L1309.0 683.74 L1311.0 683.60 L1313.0 683.48 L1315.0 683.38 L1317.0 683.30 L1319.0 683.24 L1321.0 683.19 L1323.0 683.15 L1325.0 683.09 L1327.0 683.02 L1329.0 682.93 L1331.0 682.81 L1333.0 682.69 L1335.0 682.55 L1337.0 682.43 L1339.0 682.32 L1341.0 682.23 L1343.0 682.17 L1345.0 682.11 L1347.0 682.07 L1349.0 682.02 L1351.0 681.95 L1353.0 681.86 L1355.0 681.75 L1357.0 681.62 L1359.0 681.48 L1361.0 681.34 L1363.0 681.21 L1365.0 681.11 L1367.0 681.03 L1369.0 680.96 L1371.0 680.91 L1373.0 680.86 L1375.0 680.80 L1377.0 680.72 L1379.0 680.62 L1381.0 680.50 L1383.0 680.36 L1385.0 680.22 L1387.0 680.09 L1389.0 679.98 L1391.0 679.90 L1393.0 679.83 L1395.0 679.78 L1395.0 679.78" fill="none" stroke="#e3855a" stroke-width="1.2" stroke-linejoin="round"/><path d="M805.0 703.10 L807.0 702.85 L809.0 702.57 L811.0 702.26 L813.0 701.95 L815.0 701.68 L817.0 701.44 L819.0 701.26 L821.0 701.13 L823.0 701.02 L825.0 700.91 L827.0 700.78 L829.0 700.61 L831.0 700.39 L833.0 700.12 L835.0 699.81 L837.0 699.51 L839.0 699.21 L841.0 698.96 L843.0 698.76 L845.0 698.60 L847.0 698.48 L849.0 698.38 L851.0 698.26 L853.0 698.11 L855.0 697.91 L857.0 697.66 L859.0 697.37 L861.0 697.06 L863.0 696.76 L865.0 696.48 L867.0 696.26 L869.0 696.08 L871.0 695.95 L873.0 695.84 L875.0 695.73 L877.0 695.60 L879.0 695.42 L881.0 695.20 L883.0 694.92 L885.0 694.62 L887.0 694.31 L889.0 694.02 L891.0 693.77 L893.0 693.57 L895.0 693.42 L897.0 693.31 L899.0 693.20 L901.0 693.08 L903.0 692.93 L905.0 692.72 L907.0 692.47 L909.0 692.18 L911.0 691.87 L913.0 691.57 L915.0 691.30 L917.0 691.07 L919.0 690.90 L921.0 690.78 L923.0 690.67 L925.0 690.56 L927.0 690.42 L929.0 690.24 L931.0 690.01 L933.0 689.73 L935.0 689.43 L937.0 689.12 L939.0 688.83 L941.0 688.59 L943.0 688.39 L945.0 688.25 L947.0 688.13 L949.0 688.03 L951.0 687.91 L953.0 687.75 L955.0 687.54 L957.0 687.28 L959.0 686.98 L961.0 686.67 L963.0 686.38 L965.0 686.11 L967.0 685.89 L969.0 685.73 L971.0 685.60 L973.0 685.50 L975.0 685.39 L977.0 685.25 L979.0 685.06 L981.0 684.82 L983.0 684.54 L985.0 684.23 L987.0 683.93 L989.0 683.65 L991.0 683.41 L993.0 683.22 L995.0 683.08 L997.0 682.97 L999.0 682.86 L1001.0 682.74 L1003.0 682.57 L1005.0 682.36 L1007.0 682.09 L1009.0 681.79 L1011.0 681.49 L1013.0 681.19 L1015.0 680.93 L1017.0 680.72 L1019.0 680.56 L1021.0 680.43 L1023.0 680.33 L1025.0 680.22 L1027.0 680.07 L1029.0 679.88 L1031.0 679.64 L1033.0 679.35 L1035.0 679.05 L1037.0 678.74 L1039.0 678.46 L1041.0 678.23 L1043.0 678.05 L1045.0 677.91 L1047.0 677.80 L1049.0 677.69 L1051.0 677.56 L1053.0 677.40 L1055.0 677.18 L1057.0 676.91 L1059.0 676.61 L1061.0 676.30 L1063.0 676.01 L1065.0 675.75 L1067.0 675.54 L1069.0 675.39 L1071.0 675.27 L1073.0 675.16 L1075.0 675.05 L1077.0 674.90 L1079.0 674.70 L1081.0 674.46 L1083.0 674.17 L1085.0 673.86 L1087.0 673.56 L1089.0 673.28 L1091.0 673.05 L1093.0 672.88 L1095.0 672.74 L1097.0 672.64 L1099.0 672.54 L1101.0 672.41 L1103.0 672.24 L1105.0 672.03 L1107.0 671.77 L1109.0 671.48 L1111.0 671.18 L1113.0 670.90 L1115.0 670.66 L1117.0 670.47 L1119.0 670.32 L1121.0 670.20 L1123.0 670.10 L1125.0 669.98 L1127.0 669.83 L1129.0 669.63 L1131.0 669.38 L1133.0 669.09 L1135.0 668.78 L1137.0 668.48 L1139.0 668.21 L1141.0 667.99 L1143.0 667.82 L1145.0 667.69 L1147.0 667.58 L1149.0 667.48 L1151.0 667.34 L1153.0 667.16 L1155.0 666.93 L1157.0 666.66 L1159.0 666.36 L1161.0 666.05 L1163.0 665.77 L1165.0 665.52 L1167.0 665.33 L1169.0 665.18 L1171.0 665.07 L1173.0 664.96 L1175.0 664.84 L1177.0 664.69 L1179.0 664.48 L1181.0 664.23 L1183.0 663.93 L1185.0 663.63 L1187.0 663.33 L1189.0 663.06 L1191.0 662.85 L1193.0 662.68 L1195.0 662.55 L1197.0 662.45 L1199.0 662.34 L1201.0 662.20 L1203.0 662.02 L1205.0 661.78 L1207.0 661.51 L1209.0 661.20 L1211.0 660.90 L1213.0 660.62 L1215.0 660.38 L1217.0 660.19 L1219.0 660.05 L1221.0 659.93 L1223.0 659.83 L1225.0 659.71 L1227.0 659.55 L1229.0 659.34 L1231.0 659.08 L1233.0 658.78 L1235.0 658.47 L1237.0 658.18 L1239.0 657.92 L1241.0 657.71 L1243.0 657.54 L1245.0 657.42 L1247.0 657.32 L1249.0 657.21 L1251.0 657.06 L1253.0 656.88 L1255.0 656.64 L1257.0 656.36 L1259.0 656.05 L1261.0 655.75 L1263.0 655.47 L1265.0 655.24 L1267.0 655.05 L1269.0 654.91 L1271.0 654.80 L1273.0 654.70 L1275.0 654.57 L1277.0 654.41 L1279.0 654.19 L1281.0 653.93 L1283.0 653.63 L1285.0 653.33 L1287.0 653.03 L1289.0 652.78 L1291.0 652.57 L1293.0 652.41 L1295.0 652.29 L1297.0 652.19 L1299.0 652.08 L1301.0 651.93 L1303.0 651.74 L1305.0 651.50 L1307.0 651.21 L1309.0 650.91 L1311.0 650.61 L1313.0 650.33 L1315.0 650.10 L1317.0 649.92 L1319.0 649.79 L1321.0 649.68 L1323.0 649.57 L1325.0 649.45 L1327.0 649.28 L1329.0 649.06 L1331.0 648.79 L1333.0 648.49 L1335.0 648.18 L1337.0 647.89 L1339.0 647.64 L1341.0 647.44 L1343.0 647.29 L1345.0 647.17 L1347.0 647.07 L1349.0 646.95 L1351.0 646.80 L1353.0 646.61 L1355.0 646.36 L1357.0 646.07 L1359.0 645.77 L1361.0 645.47 L1363.0 645.20 L1365.0 644.97 L1367.0 644.80 L1369.0 644.67 L1371.0 644.56 L1373.0 644.45 L1375.0 644.32 L1377.0 644.15 L1379.0 643.92 L1381.0 643.65 L1383.0 643.35 L1385.0 643.04 L1387.0 642.76 L1389.0 642.51 L1391.0 642.32 L1393.0 642.17 L1395.0 642.05 L1395.0 642.05" fill="none" stroke="#f4afc0" stroke-width="1.2" stroke-linejoin="round"/><path d="M805.0 703.10 L807.0 702.79 L809.0 702.42 L811.0 702.03 L813.0 701.64 L815.0 701.29 L817.0 701.00 L819.0 700.77 L821.0 700.60 L823.0 700.46 L825.0 700.33 L827.0 700.16 L829.0 699.95 L831.0 699.67 L833.0 699.33 L835.0 698.95 L837.0 698.56 L839.0 698.19 L841.0 697.87 L843.0 697.62 L845.0 697.43 L847.0 697.28 L849.0 697.15 L851.0 697.00 L853.0 696.81 L855.0 696.55 L857.0 696.23 L859.0 695.86 L861.0 695.47 L863.0 695.08 L865.0 694.73 L867.0 694.44 L869.0 694.21 L871.0 694.05 L873.0 693.91 L875.0 693.77 L877.0 693.60 L879.0 693.37 L881.0 693.08 L883.0 692.73 L885.0 692.34 L887.0 691.95 L889.0 691.58 L891.0 691.26 L893.0 691.00 L895.0 690.81 L897.0 690.66 L899.0 690.53 L901.0 690.38 L903.0 690.18 L905.0 689.92 L907.0 689.59 L909.0 689.22 L911.0 688.82 L913.0 688.43 L915.0 688.09 L917.0 687.81 L919.0 687.59 L921.0 687.42 L923.0 687.29 L925.0 687.15 L927.0 686.97 L929.0 686.74 L931.0 686.44 L933.0 686.08 L935.0 685.69 L937.0 685.30 L939.0 684.93 L941.0 684.62 L943.0 684.37 L945.0 684.19 L947.0 684.04 L949.0 683.91 L951.0 683.75 L953.0 683.55 L955.0 683.28 L957.0 682.95 L959.0 682.57 L961.0 682.17 L963.0 681.79 L965.0 681.45 L967.0 681.17 L969.0 680.96 L971.0 680.80 L973.0 680.66 L975.0 680.52 L977.0 680.34 L979.0 680.10 L981.0 679.80 L983.0 679.44 L985.0 679.05 L987.0 678.65 L989.0 678.29 L991.0 677.98 L993.0 677.74 L995.0 677.56 L997.0 677.42 L999.0 677.29 L1001.0 677.13 L1003.0 676.92 L1005.0 676.64 L1007.0 676.30 L1009.0 675.92 L1011.0 675.52 L1013.0 675.14 L1015.0 674.81 L1017.0 674.54 L1019.0 674.33 L1021.0 674.18 L1023.0 674.04 L1025.0 673.90 L1027.0 673.71 L1029.0 673.47 L1031.0 673.16 L1033.0 672.79 L1035.0 672.40 L1037.0 672.01 L1039.0 671.65 L1041.0 671.35 L1043.0 671.12 L1045.0 670.94 L1047.0 670.80 L1049.0 670.66 L1051.0 670.50 L1053.0 670.28 L1055.0 670.00 L1057.0 669.66 L1059.0 669.27 L1061.0 668.88 L1063.0 668.50 L1065.0 668.17 L1067.0 667.91 L1069.0 667.71 L1071.0 667.56 L1073.0 667.42 L1075.0 667.27 L1077.0 667.08 L1079.0 666.83 L1081.0 666.51 L1083.0 666.15 L1085.0 665.75 L1087.0 665.36 L1089.0 665.01 L1091.0 664.72 L1093.0 664.49 L1095.0 664.32 L1097.0 664.18 L1099.0 664.05 L1101.0 663.90 L1103.0 663.69 L1105.0 663.41 L1107.0 663.08 L1109.0 662.72 L1111.0 662.34 L1113.0 661.99 L1115.0 661.69 L1117.0 661.44 L1119.0 661.26 L1121.0 661.11 L1123.0 660.98 L1125.0 660.83 L1127.0 660.63 L1129.0 660.37 L1131.0 660.05 L1133.0 659.68 L1135.0 659.28 L1137.0 658.90 L1139.0 658.55 L1141.0 658.27 L1143.0 658.05 L1145.0 657.88 L1147.0 657.74 L1149.0 657.60 L1151.0 657.43 L1153.0 657.20 L1155.0 656.91 L1157.0 656.56 L1159.0 656.17 L1161.0 655.77 L1163.0 655.41 L1165.0 655.09 L1167.0 654.84 L1169.0 654.65 L1171.0 654.51 L1173.0 654.37 L1175.0 654.22 L1177.0 654.02 L1179.0 653.76 L1181.0 653.43 L1183.0 653.05 L1185.0 652.66 L1187.0 652.27 L1189.0 651.93 L1191.0 651.65 L1193.0 651.44 L1195.0 651.28 L1197.0 651.14 L1199.0 651.00 L1201.0 650.82 L1203.0 650.59 L1205.0 650.29 L1207.0 649.93 L1209.0 649.54 L1211.0 649.15 L1213.0 648.78 L1215.0 648.48 L1217.0 648.23 L1219.0 648.05 L1221.0 647.90 L1223.0 647.77 L1225.0 647.61 L1227.0 647.41 L1229.0 647.14 L1231.0 646.81 L1233.0 646.44 L1235.0 646.05 L1237.0 645.67 L1239.0 645.34 L1241.0 645.07 L1243.0 644.87 L1245.0 644.71 L1247.0 644.58 L1249.0 644.44 L1251.0 644.26 L1253.0 644.02 L1255.0 643.72 L1257.0 643.37 L1259.0 642.98 L1261.0 642.60 L1263.0 642.24 L1265.0 641.95 L1267.0 641.71 L1269.0 641.54 L1271.0 641.40 L1273.0 641.26 L1275.0 641.10 L1277.0 640.89 L1279.0 640.62 L1281.0 640.28 L1283.0 639.90 L1285.0 639.50 L1287.0 639.13 L1289.0 638.80 L1291.0 638.53 L1293.0 638.33 L1295.0 638.18 L1297.0 638.04 L1299.0 637.90 L1301.0 637.71 L1303.0 637.47 L1305.0 637.15 L1307.0 636.79 L1309.0 636.40 L1311.0 636.01 L1313.0 635.66 L1315.0 635.36 L1317.0 635.13 L1319.0 634.96 L1321.0 634.82 L1323.0 634.69 L1325.0 634.52 L1327.0 634.30 L1329.0 634.02 L1331.0 633.68 L1333.0 633.30 L1335.0 632.90 L1337.0 632.53 L1339.0 632.21 L1341.0 631.95 L1343.0 631.76 L1345.0 631.61 L1347.0 631.47 L1349.0 631.33 L1351.0 631.13 L1353.0 630.88 L1355.0 630.56 L1357.0 630.20 L1359.0 629.80 L1361.0 629.42 L1363.0 629.07 L1365.0 628.79 L1367.0 628.56 L1369.0 628.40 L1371.0 628.26 L1373.0 628.12 L1375.0 627.95 L1377.0 627.73 L1379.0 627.44 L1381.0 627.09 L1383.0 626.71 L1385.0 626.32 L1387.0 625.95 L1389.0 625.64 L1391.0 625.38 L1393.0 625.20 L1395.0 625.05 L1395.0 625.05" fill="none" stroke="#6da0dc" stroke-width="1.2" stroke-linejoin="round"/><path d="M805.0 703.10 L807.0 702.78 L809.0 702.40 L811.0 702.00 L813.0 701.60 L815.0 701.23 L817.0 700.93 L819.0 700.69 L821.0 700.52 L823.0 700.38 L825.0 700.24 L827.0 700.07 L829.0 699.84 L831.0 699.55 L833.0 699.20 L835.0 698.81 L837.0 698.41 L839.0 698.02 L841.0 697.69 L843.0 697.43 L845.0 697.23 L847.0 697.07 L849.0 696.94 L851.0 696.79 L853.0 696.59 L855.0 696.33 L857.0 696.00 L859.0 695.62 L861.0 695.21 L863.0 694.81 L865.0 694.45 L867.0 694.15 L869.0 693.92 L871.0 693.75 L873.0 693.61 L875.0 693.46 L877.0 693.29 L879.0 693.06 L881.0 692.76 L883.0 692.40 L885.0 692.00 L887.0 691.59 L889.0 691.21 L891.0 690.88 L893.0 690.62 L895.0 690.42 L897.0 690.27 L899.0 690.13 L901.0 689.98 L903.0 689.77 L905.0 689.50 L907.0 689.17 L909.0 688.78 L911.0 688.37 L913.0 687.98 L915.0 687.62 L917.0 687.33 L919.0 687.11 L921.0 686.94 L923.0 686.80 L925.0 686.65 L927.0 686.47 L929.0 686.23 L931.0 685.93 L933.0 685.56 L935.0 685.16 L937.0 684.75 L939.0 684.38 L941.0 684.06 L943.0 683.80 L945.0 683.61 L947.0 683.46 L949.0 683.32 L951.0 683.16 L953.0 682.95 L955.0 682.68 L957.0 682.33 L959.0 681.95 L961.0 681.54 L963.0 681.14 L965.0 680.80 L967.0 680.51 L969.0 680.29 L971.0 680.13 L973.0 679.99 L975.0 679.84 L977.0 679.66 L979.0 679.41 L981.0 679.10 L983.0 678.73 L985.0 678.32 L987.0 677.92 L989.0 677.55 L991.0 677.23 L993.0 676.99 L995.0 676.80 L997.0 676.65 L999.0 676.51 L1001.0 676.35 L1003.0 676.13 L1005.0 675.85 L1007.0 675.50 L1009.0 675.11 L1011.0 674.70 L1013.0 674.31 L1015.0 673.97 L1017.0 673.69 L1019.0 673.48 L1021.0 673.32 L1023.0 673.18 L1025.0 673.03 L1027.0 672.84 L1029.0 672.59 L1031.0 672.27 L1033.0 671.89 L1035.0 671.49 L1037.0 671.09 L1039.0 670.72 L1041.0 670.41 L1043.0 670.17 L1045.0 669.99 L1047.0 669.84 L1049.0 669.70 L1051.0 669.54 L1053.0 669.31 L1055.0 669.02 L1057.0 668.67 L1059.0 668.27 L1061.0 667.87 L1063.0 667.48 L1065.0 667.14 L1067.0 666.87 L1069.0 666.67 L1071.0 666.51 L1073.0 666.37 L1075.0 666.22 L1077.0 666.02 L1079.0 665.76 L1081.0 665.44 L1083.0 665.06 L1085.0 664.65 L1087.0 664.25 L1089.0 663.89 L1091.0 663.59 L1093.0 663.35 L1095.0 663.18 L1097.0 663.04 L1099.0 662.91 L1101.0 662.75 L1103.0 662.53 L1105.0 662.25 L1107.0 661.91 L1109.0 661.54 L1111.0 661.15 L1113.0 660.79 L1115.0 660.48 L1117.0 660.23 L1119.0 660.04 L1121.0 659.89 L1123.0 659.75 L1125.0 659.60 L1127.0 659.40 L1129.0 659.13 L1131.0 658.80 L1133.0 658.42 L1135.0 658.02 L1137.0 657.62 L1139.0 657.27 L1141.0 656.98 L1143.0 656.75 L1145.0 656.58 L1147.0 656.44 L1149.0 656.30 L1151.0 656.12 L1153.0 655.89 L1155.0 655.59 L1157.0 655.23 L1159.0 654.83 L1161.0 654.43 L1163.0 654.05 L1165.0 653.73 L1167.0 653.47 L1169.0 653.28 L1171.0 653.13 L1173.0 652.99 L1175.0 652.84 L1177.0 652.63 L1179.0 652.36 L1181.0 652.03 L1183.0 651.64 L1185.0 651.24 L1187.0 650.85 L1189.0 650.50 L1191.0 650.21 L1193.0 649.99 L1195.0 649.83 L1197.0 649.69 L1199.0 649.55 L1201.0 649.37 L1203.0 649.13 L1205.0 648.82 L1207.0 648.45 L1209.0 648.06 L1211.0 647.65 L1213.0 647.28 L1215.0 646.97 L1217.0 646.72 L1219.0 646.54 L1221.0 646.39 L1223.0 646.25 L1225.0 646.09 L1227.0 645.88 L1229.0 645.61 L1231.0 645.27 L1233.0 644.89 L1235.0 644.49 L1237.0 644.11 L1239.0 643.78 L1241.0 643.50 L1243.0 643.29 L1245.0 643.13 L1247.0 643.00 L1249.0 642.86 L1251.0 642.67 L1253.0 642.43 L1255.0 642.12 L1257.0 641.76 L1259.0 641.37 L1261.0 640.98 L1263.0 640.62 L1265.0 640.31 L1267.0 640.08 L1269.0 639.90 L1271.0 639.76 L1273.0 639.62 L1275.0 639.46 L1277.0 639.24 L1279.0 638.96 L1281.0 638.61 L1283.0 638.23 L1285.0 637.82 L1287.0 637.44 L1289.0 637.11 L1291.0 636.84 L1293.0 636.63 L1295.0 636.47 L1297.0 636.34 L1299.0 636.19 L1301.0 636.00 L1303.0 635.75 L1305.0 635.43 L1307.0 635.06 L1309.0 634.66 L1311.0 634.26 L1313.0 633.90 L1315.0 633.60 L1317.0 633.37 L1319.0 633.20 L1321.0 633.05 L1323.0 632.92 L1325.0 632.75 L1327.0 632.53 L1329.0 632.24 L1331.0 631.89 L1333.0 631.50 L1335.0 631.10 L1337.0 630.72 L1339.0 630.39 L1341.0 630.12 L1343.0 629.93 L1345.0 629.77 L1347.0 629.64 L1349.0 629.49 L1351.0 629.29 L1353.0 629.03 L1355.0 628.71 L1357.0 628.33 L1359.0 627.93 L1361.0 627.54 L1363.0 627.19 L1365.0 626.89 L1367.0 626.67 L1369.0 626.50 L1371.0 626.36 L1373.0 626.22 L1375.0 626.04 L1377.0 625.82 L1379.0 625.52 L1381.0 625.17 L1383.0 624.77 L1385.0 624.37 L1387.0 624.00 L1389.0 623.68 L1391.0 623.42 L1393.0 623.23 L1395.0 623.08 L1395.0 623.08" fill="none" stroke="#a597d6" stroke-width="1.2" stroke-linejoin="round"/></svg>
<div class="t" style="left:88.56px;top:404.42px;font-size:10.6px;line-height:10.6px;color:#2a2d36;transform:scaleX(0.9955);transform-origin:0 0;">180 GB</div>
<div class="t" style="left:88.56px;top:421.97px;font-size:10.6px;line-height:10.6px;color:#2a2d36;transform:scaleX(0.9955);transform-origin:0 0;">150 GB</div>
<div class="t" style="left:88.56px;top:439.52px;font-size:10.6px;line-height:10.6px;color:#2a2d36;transform:scaleX(0.9955);transform-origin:0 0;">120 GB</div>
<div class="t" style="left:94.68px;top:457.07px;font-size:10.6px;line-height:10.6px;color:#2a2d36;transform:scaleX(0.9864);transform-origin:0 0;">90 GB</div>
<div class="t" style="left:94.68px;top:474.62px;font-size:10.6px;line-height:10.6px;color:#2a2d36;transform:scaleX(0.9863);transform-origin:0 0;">60 GB</div>
<div class="t" style="left:94.68px;top:492.17px;font-size:10.6px;line-height:10.6px;color:#2a2d36;transform:scaleX(0.9864);transform-origin:0 0;">30 GB</div>
<div class="t" style="left:89.83px;top:509.72px;font-size:10.6px;line-height:10.6px;color:#2a2d36;transform:scaleX(1.0047);transform-origin:0 0;">0 bytes</div>
<div class="t" style="left:760.56px;top:404.52px;font-size:10.6px;line-height:10.6px;color:#2a2d36;transform:scaleX(0.9955);transform-origin:0 0;">100 GB</div>
<div class="t" style="left:766.68px;top:425.62px;font-size:10.6px;line-height:10.6px;color:#2a2d36;transform:scaleX(0.9864);transform-origin:0 0;">80 GB</div>
<div class="t" style="left:766.68px;top:446.72px;font-size:10.6px;line-height:10.6px;color:#2a2d36;transform:scaleX(0.9863);transform-origin:0 0;">60 GB</div>
<div class="t" style="left:766.52px;top:467.82px;font-size:10.6px;line-height:10.6px;color:#2a2d36;transform:scaleX(0.9920);transform-origin:0 0;">40 GB</div>
<div class="t" style="left:766.57px;top:488.92px;font-size:10.6px;line-height:10.6px;color:#2a2d36;transform:scaleX(0.9900);transform-origin:0 0;">20 GB</div>
<div class="t" style="left:761.83px;top:510.02px;font-size:10.6px;line-height:10.6px;color:#2a2d36;transform:scaleX(1.0047);transform-origin:0 0;">0 bytes</div>
<div class="t" style="left:100.60px;top:592.02px;font-size:10.6px;line-height:10.6px;color:#2a2d36;transform:scaleX(0.9848);transform-origin:0 0;">4 TB</div>
<div class="t" style="left:100.77px;top:618.57px;font-size:10.6px;line-height:10.6px;color:#2a2d36;transform:scaleX(0.9771);transform-origin:0 0;">3 TB</div>
<div class="t" style="left:100.67px;top:645.12px;font-size:10.6px;line-height:10.6px;color:#2a2d36;transform:scaleX(0.9820);transform-origin:0 0;">2 TB</div>
<div class="t" style="left:100.84px;top:671.67px;font-size:10.6px;line-height:10.6px;color:#2a2d36;transform:scaleX(0.9740);transform-origin:0 0;">1 TB</div>
<div class="t" style="left:87.93px;top:698.22px;font-size:10.6px;line-height:10.6px;color:#2a2d36;transform:scaleX(1.0047);transform-origin:0 0;">0 bytes</div>
<div class="t" style="left:766.13px;top:592.52px;font-size:10.6px;line-height:10.6px;color:#2a2d36;transform:scaleX(0.9834);transform-origin:0 0;">2.5 TB</div>
<div class="t" style="left:774.87px;top:613.66px;font-size:10.6px;line-height:10.6px;color:#2a2d36;transform:scaleX(0.9820);transform-origin:0 0;">2 TB</div>
<div class="t" style="left:766.30px;top:634.80px;font-size:10.6px;line-height:10.6px;color:#2a2d36;transform:scaleX(0.9778);transform-origin:0 0;">1.5 TB</div>
<div class="t" style="left:775.04px;top:655.94px;font-size:10.6px;line-height:10.6px;color:#2a2d36;transform:scaleX(0.9740);transform-origin:0 0;">1 TB</div>
<div class="t" style="left:760.91px;top:677.08px;font-size:10.6px;line-height:10.6px;color:#2a2d36;transform:scaleX(0.9941);transform-origin:0 0;">500 GB</div>
<div class="t" style="left:762.13px;top:698.22px;font-size:10.6px;line-height:10.6px;color:#2a2d36;transform:scaleX(1.0047);transform-origin:0 0;">0 bytes</div>
<div class="t" style="left:121.81px;top:524.62px;font-size:10.6px;line-height:10.6px;color:#2a2d36;transform:scaleX(1.1215);transform-origin:0 0;">6/01</div>
<div class="t" style="left:793.71px;top:524.72px;font-size:10.6px;line-height:10.6px;color:#2a2d36;transform:scaleX(1.1215);transform-origin:0 0;">6/01</div>
<div class="t" style="left:120.21px;top:712.72px;font-size:10.6px;line-height:10.6px;color:#2a2d36;transform:scaleX(1.1215);transform-origin:0 0;">6/01</div>
<div class="t" style="left:793.71px;top:712.72px;font-size:10.6px;line-height:10.6px;color:#2a2d36;transform:scaleX(1.1215);transform-origin:0 0;">6/01</div>
<div class="t" style="left:221.38px;top:524.62px;font-size:10.6px;line-height:10.6px;color:#2a2d36;transform:scaleX(1.1212);transform-origin:0 0;">6/05</div>
<div class="t" style="left:893.28px;top:524.72px;font-size:10.6px;line-height:10.6px;color:#2a2d36;transform:scaleX(1.1212);transform-origin:0 0;">6/05</div>
<div class="t" style="left:219.78px;top:712.72px;font-size:10.6px;line-height:10.6px;color:#2a2d36;transform:scaleX(1.1212);transform-origin:0 0;">6/05</div>
<div class="t" style="left:893.28px;top:712.72px;font-size:10.6px;line-height:10.6px;color:#2a2d36;transform:scaleX(1.1212);transform-origin:0 0;">6/05</div>
<div class="t" style="left:320.95px;top:524.62px;font-size:10.6px;line-height:10.6px;color:#2a2d36;transform:scaleX(1.1269);transform-origin:0 0;">6/09</div>
<div class="t" style="left:992.85px;top:524.72px;font-size:10.6px;line-height:10.6px;color:#2a2d36;transform:scaleX(1.1269);transform-origin:0 0;">6/09</div>
<div class="t" style="left:319.35px;top:712.72px;font-size:10.6px;line-height:10.6px;color:#2a2d36;transform:scaleX(1.1269);transform-origin:0 0;">6/09</div>
<div class="t" style="left:992.85px;top:712.72px;font-size:10.6px;line-height:10.6px;color:#2a2d36;transform:scaleX(1.1269);transform-origin:0 0;">6/09</div>
<div class="t" style="left:420.53px;top:524.62px;font-size:10.6px;line-height:10.6px;color:#2a2d36;transform:scaleX(1.1266);transform-origin:0 0;">6/13</div>
<div class="t" style="left:1092.43px;top:524.72px;font-size:10.6px;line-height:10.6px;color:#2a2d36;transform:scaleX(1.1266);transform-origin:0 0;">6/13</div>
<div class="t" style="left:418.93px;top:712.72px;font-size:10.6px;line-height:10.6px;color:#2a2d36;transform:scaleX(1.1266);transform-origin:0 0;">6/13</div>
<div class="t" style="left:1092.43px;top:712.72px;font-size:10.6px;line-height:10.6px;color:#2a2d36;transform:scaleX(1.1266);transform-origin:0 0;">6/13</div>
<div class="t" style="left:520.04px;top:524.62px;font-size:10.6px;line-height:10.6px;color:#2a2d36;transform:scaleX(1.1409);transform-origin:0 0;">6/17</div>
<div class="t" style="left:1191.94px;top:524.72px;font-size:10.6px;line-height:10.6px;color:#2a2d36;transform:scaleX(1.1409);transform-origin:0 0;">6/17</div>
<div class="t" style="left:518.44px;top:712.72px;font-size:10.6px;line-height:10.6px;color:#2a2d36;transform:scaleX(1.1409);transform-origin:0 0;">6/17</div>
<div class="t" style="left:1191.94px;top:712.72px;font-size:10.6px;line-height:10.6px;color:#2a2d36;transform:scaleX(1.1409);transform-origin:0 0;">6/17</div>
<div class="t" style="left:619.81px;top:524.62px;font-size:10.6px;line-height:10.6px;color:#2a2d36;transform:scaleX(1.1215);transform-origin:0 0;">6/21</div>
<div class="t" style="left:1291.71px;top:524.72px;font-size:10.6px;line-height:10.6px;color:#2a2d36;transform:scaleX(1.1215);transform-origin:0 0;">6/21</div>
<div class="t" style="left:618.21px;top:712.72px;font-size:10.6px;line-height:10.6px;color:#2a2d36;transform:scaleX(1.1215);transform-origin:0 0;">6/21</div>
<div class="t" style="left:1291.71px;top:712.72px;font-size:10.6px;line-height:10.6px;color:#2a2d36;transform:scaleX(1.1215);transform-origin:0 0;">6/21</div>
<div class="b" style="left:93px;top:753px;width:248px;height:29px;border:1px solid #a9acc8;border-radius:4px;background:#fff"></div>
<div class="t" style="left:105.35px;top:761.33px;font-size:12.6px;line-height:12.6px;color:#6c7193;transform:scaleX(0.9638);transform-origin:0 0;">Search</div>
<svg style="left:307px;top:758px" width="19" height="19" viewBox="0 0 19 19"><circle cx="7.5" cy="7.5" r="5.6" fill="none" stroke="#474a5e" stroke-width="1.6"/><path d="M11.6 11.6 L16.5 16.5" stroke="#474a5e" stroke-width="1.9" stroke-linecap="round"/></svg>
</div></div></body></html>
